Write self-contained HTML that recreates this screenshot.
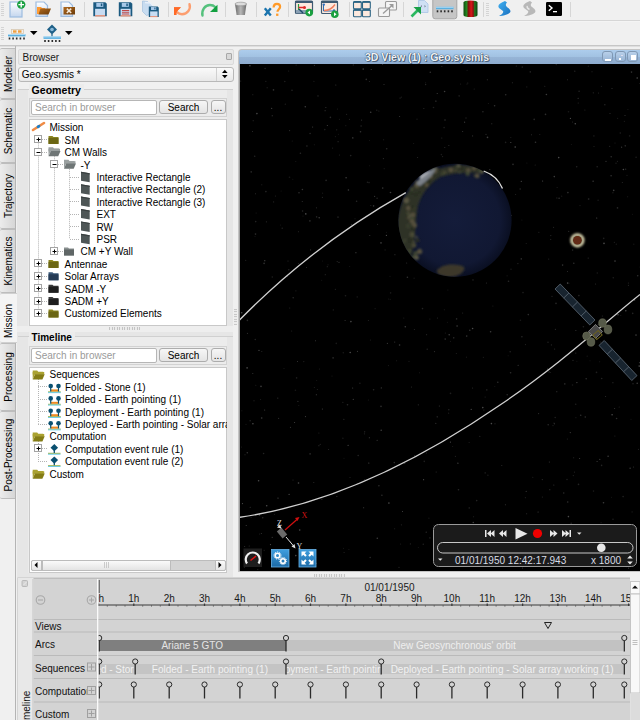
<!DOCTYPE html>
<html><head><meta charset="utf-8">
<style>
*{box-sizing:border-box;margin:0;padding:0}
html,body{width:640px;height:720px;overflow:hidden;background:#f0f0f0;font-family:"Liberation Sans",sans-serif;font-size:10px;color:#000}
.a{position:absolute}
.tb1{left:0;top:0;width:640px;height:22px;background:#f0f0f0;border-bottom:1px solid #f4f4f4}
.tb2{left:0;top:22px;width:640px;height:25px;background:#f0f0f0;border-bottom:1px solid #dedede}
.sep{width:1px;height:16px;top:2px;background:#d0d0d0}
.grip{width:3px;height:14px;background:repeating-linear-gradient(#c0c0c0 0 1px,transparent 1px 2px)}
/* vertical tabs */
.tab{left:0;width:15px;background:linear-gradient(to right,#ececec,#d6d6d6);border:1px solid #bdbdbd;border-right:none;border-left:none;border-radius:2px 0 0 2px}
.tab span{position:absolute;left:50%;top:50%;transform:translate(-50%,-50%) rotate(-90deg);white-space:nowrap;font-size:10px;color:#000}
.tab.sel{background:#f4f4f4;width:17px;border-color:#d0d0d0}
/* dock */
.hdr{background:#e9e9e9;border:1px solid #dadada;border-radius:2px}
.combo{background:linear-gradient(#fafafa,#e8e8e8);border:1px solid #b8b8b8;border-radius:3px}
.gline{height:1px;background:#cfcfcf}
.gtitle{font-weight:bold;font-size:10px;background:#f0f0f0;padding:0 3px}
.field{background:#fff;border:1px solid #b6b6b6;border-radius:2px;color:#9a9a9a;padding-left:3px;line-height:13px}
.btn{background:linear-gradient(#f6f6f6,#e4e4e4);border:1px solid #acacac;border-radius:3px;text-align:center;line-height:13px}
.tree{background:#fff;border:1px solid #c8c8c8}
.ti{position:absolute;white-space:nowrap;font-size:10px;line-height:12px}
/* 3D */
.v3d{left:238px;top:48px;width:402px;height:524px;background:#000;border-left:2px solid #c8c8c8}
.ttl{left:0;top:0;width:400px;height:16px;background:linear-gradient(#b4cde6,#98b8d8);border-radius:3px 3px 0 0;border-bottom:1px solid #6f8fb0}
.tbtn{width:11px;height:11px;border:1px solid #7f98b4;border-radius:3px;background:linear-gradient(#b8d0ea,#98b4d4)}
/* timeline */
.tl{left:33px;top:579px;width:597px;height:141px;background:#d4d4d4}
</style></head><body>
<!-- toolbar 1 -->
<div class="a tb1"></div><div class="a" style="left:0;top:20px;width:640px;height:1px;background:#d6d6d6"></div>
<div class="a tb2"></div>
<svg class="a" style="left:0;top:0" width="640" height="46" viewBox="0 0 640 46">
<defs>
<linearGradient id="pg" x1="0" y1="0" x2="0" y2="1"><stop offset="0" stop-color="#ffffff"/><stop offset="1" stop-color="#c4d6ee"/></linearGradient>
<linearGradient id="cyl" x1="0" x2="1"><stop offset="0" stop-color="#0e4a0e"/><stop offset="0.22" stop-color="#228a22"/><stop offset="0.36" stop-color="#8a1010"/><stop offset="0.55" stop-color="#d81818"/><stop offset="0.7" stop-color="#901010"/><stop offset="0.8" stop-color="#1e7a1e"/><stop offset="1" stop-color="#0c3e0c"/></linearGradient>
<linearGradient id="bin" x1="0" x2="1"><stop offset="0" stop-color="#6a6a6a"/><stop offset="0.5" stop-color="#b8b8b8"/><stop offset="1" stop-color="#6a6a6a"/></linearGradient>
<linearGradient id="fold" x1="0" y1="0" x2="1" y2="1"><stop offset="0" stop-color="#b06a20"/><stop offset="1" stop-color="#6a3a08"/></linearGradient>
<linearGradient id="bs" x1="0" y1="0" x2="1" y2="1"><stop offset="0" stop-color="#40b0f0"/><stop offset="1" stop-color="#1a70c0"/></linearGradient>
</defs>
<rect x="1" y="3" width="3" height="1" fill="#d4d4d4"/>
<rect x="1" y="5" width="3" height="1" fill="#d4d4d4"/>
<rect x="1" y="7" width="3" height="1" fill="#d4d4d4"/>
<rect x="1" y="9" width="3" height="1" fill="#d4d4d4"/>
<rect x="1" y="11" width="3" height="1" fill="#d4d4d4"/>
<rect x="1" y="13" width="3" height="1" fill="#d4d4d4"/>
<rect x="1" y="15" width="3" height="1" fill="#d4d4d4"/>
<rect x="1" y="27" width="3" height="1" fill="#d4d4d4"/>
<rect x="1" y="29" width="3" height="1" fill="#d4d4d4"/>
<rect x="1" y="31" width="3" height="1" fill="#d4d4d4"/>
<rect x="1" y="33" width="3" height="1" fill="#d4d4d4"/>
<rect x="1" y="35" width="3" height="1" fill="#d4d4d4"/>
<rect x="1" y="37" width="3" height="1" fill="#d4d4d4"/>
<rect x="1" y="39" width="3" height="1" fill="#d4d4d4"/>
<rect x="486" y="3" width="3" height="1" fill="#d4d4d4"/>
<rect x="486" y="5" width="3" height="1" fill="#d4d4d4"/>
<rect x="486" y="7" width="3" height="1" fill="#d4d4d4"/>
<rect x="486" y="9" width="3" height="1" fill="#d4d4d4"/>
<rect x="486" y="11" width="3" height="1" fill="#d4d4d4"/>
<rect x="486" y="13" width="3" height="1" fill="#d4d4d4"/>
<rect x="486" y="15" width="3" height="1" fill="#d4d4d4"/>
<path d="M84.5 2V17" stroke="#d6d6d6" stroke-width="1"/>
<path d="M168.5 2V17" stroke="#d6d6d6" stroke-width="1"/>
<path d="M225.5 2V17" stroke="#d6d6d6" stroke-width="1"/>
<path d="M256.5 2V17" stroke="#d6d6d6" stroke-width="1"/>
<path d="M288.5 2V17" stroke="#d6d6d6" stroke-width="1"/>
<path d="M349.5 2V17" stroke="#d6d6d6" stroke-width="1"/>
<path d="M403.5 2V17" stroke="#d6d6d6" stroke-width="1"/>
<path d="M483.5 2V17" stroke="#d6d6d6" stroke-width="1"/>
<path d="M570.5 2V17" stroke="#d6d6d6" stroke-width="1"/>
<rect x="10.0" y="2.0" width="12" height="15" fill="url(#pg)" stroke="#9dbce0" stroke-width="1.2"/>
<circle cx="21.2" cy="4.6" r="4.2" fill="#1aa040"/><path d="M18.4 4.6h5.6M21.2 1.8v5.6" stroke="#fff" stroke-width="1.4"/>
<path d="M36.0 2.0h8l3.5 3.5v11h-11.5z" fill="url(#pg)" stroke="#9dbce0" stroke-width="1.2"/>
<path d="M37 7h4l1 1h3v6h-8z" fill="#ff9a30"/><path d="M40.5 8.5h10.5l-2.5 6h-10z" fill="url(#fold)"/>
<path d="M61.0 2.0h8l3.5 3.5v11h-11.5z" fill="url(#pg)" stroke="#9dbce0" stroke-width="1.2"/>
<rect x="63.5" y="7" width="11.5" height="7.5" fill="url(#fold)"/><path d="M66.8 8.6l4.4 4.4M71.2 8.6l-4.4 4.4" stroke="#f4e8d8" stroke-width="1.5"/>
<g transform="translate(93.3 2.3) scale(1.0)"><path d="M0 0h12l1.5 1.5v12.5h-13.5z" fill="#1c5a80"/><rect x="3" y="0.6" width="7" height="4" fill="#a8c8e8"/><rect x="7.5" y="1.2" width="1.5" height="2.6" fill="#1c5a80"/><rect x="1.8" y="6.5" width="10" height="6.5" fill="#c8dcf2"/><rect x="1.8" y="12.8" width="10" height="1.4" fill="#f09a80"/></g>
<g transform="translate(118.8 2.3) scale(1.0)"><path d="M0 0h12l1.5 1.5v12.5h-13.5z" fill="#1c5a80"/><rect x="3" y="0.6" width="7" height="4" fill="#a8c8e8"/><rect x="7.5" y="1.2" width="1.5" height="2.6" fill="#1c5a80"/><rect x="1.8" y="6.5" width="10" height="6.5" fill="#c8dcf2"/><rect x="1.8" y="12.8" width="10" height="1.4" fill="#f09a80"/><path d="M3.2 8.2h7.2M3.2 10h7.2M3.2 11.7h7.2" stroke="#c04848" stroke-width="1.1"/></g>
<path d="M142.5 1l5 0.5l5 5v7l-6 2l-4-4z" fill="#c8dcf0" stroke="#a8c4e0" stroke-width="0.8"/><path d="M145 2.5l5 0.5l4 4v6" fill="none" stroke="#e8f0fa" stroke-width="1.5"/>
<g transform="translate(148.8 6.6) scale(0.74)"><path d="M0 0h12l1.5 1.5v12.5h-13.5z" fill="#1c5a80"/><rect x="3" y="0.6" width="7" height="4" fill="#a8c8e8"/><rect x="7.5" y="1.2" width="1.5" height="2.6" fill="#1c5a80"/><rect x="1.8" y="6.5" width="10" height="6.5" fill="#c8dcf2"/><rect x="1.8" y="12.8" width="10" height="1.4" fill="#f09a80"/></g>
<path d="M189.5 4.2c1.5 5-2 10-7.5 10c-2 0-3.8-0.8-5-2" stroke="#ff8a50" stroke-width="2.4" fill="none" stroke-linecap="round" opacity="0.8"/><path d="M174 7.2h7.2l-2.4 2.4l-2.2 2.2v3.2l-2.6 0z" fill="#ff6a28"/><path d="M174 7.2l6.5 0l-6.5 7.5z" fill="#ff6a28"/>
<path d="M202.5 15.5c-1.2-5.5 2.5-10.5 7.5-10.5c2.2 0 4 0.8 5.2 2" stroke="#3ab868" stroke-width="2.4" fill="none" stroke-linecap="round" opacity="0.85"/><path d="M217.5 4.8v7.2h-7.5z" fill="#12a040"/>
<path d="M235 3.8h11.5l-1.6 11.2h-8.3z" fill="url(#bin)"/><ellipse cx="240.8" cy="4" rx="5.8" ry="1.8" fill="#dcdcdc" stroke="#8a8a8a" stroke-width="0.6"/>
<path d="M264.8 8.3l6 7.2M270.8 8.3l-6 7.2" stroke="#1a74ae" stroke-width="2.4"/><path d="M273.6 7.4c0-2.4 1.6-3.6 3.3-3.6c1.8 0 3.2 1.2 3.2 3c0 2.4-2.6 2.6-2.6 5" stroke="#ff9a28" stroke-width="2.2" fill="none"/><rect x="276.1" y="13.6" width="2.3" height="2.3" fill="#ff9a28"/>
<rect x="295.5" y="1" width="17" height="12.5" rx="1" fill="#fde9de" stroke="#3e5a72" stroke-width="1.2"/><rect x="295.5" y="1" width="17" height="2" fill="#3e5a72"/><rect x="296" y="10" width="16" height="3.3" fill="#8aa0b4"/>
<path d="M298.5 4v6" stroke="#20a040" stroke-width="1.2"/><path d="M298.5 7.5h6" stroke="#e02828" stroke-width="1.5"/><circle cx="304.5" cy="7.6" r="1.5" fill="#e02828"/><path d="M299 9l4 4" stroke="#1c4a6a" stroke-width="1.5"/>
<circle cx="309.2" cy="12.6" r="3.8" fill="#1aa040"/><path d="M307.5 12.6l2.5-2v4z" fill="#fff"/>
<rect x="321.5" y="1" width="16" height="12.5" rx="1" fill="#fde9de" stroke="#3e5a72" stroke-width="1.2"/><rect x="321.5" y="1" width="16" height="2" fill="#3e5a72"/>
<path d="M323.5 4.5v6.5h11" stroke="#3070b0" stroke-width="1" fill="none"/><path d="M324 10.5c4 0 8-1.5 11-6" stroke="#f08060" stroke-width="1.4" fill="none"/><circle cx="323.8" cy="4.6" r="1.2" fill="#3070c0"/><circle cx="334" cy="10.5" r="1.2" fill="#3070c0"/>
<circle cx="334.8" cy="14.2" r="3.8" fill="#1aa040"/><path d="M336.5 14.2l-2.5-2v4z" fill="#fff"/>
<rect x="353.5" y="1.5" width="7.8" height="7.2" rx="1" fill="#fde9de" stroke="#2c6484" stroke-width="1.1"/><rect x="353.5" y="1.5" width="7.8" height="1.4" fill="#2c6484"/>
<rect x="362.5" y="1.5" width="7.8" height="7.2" rx="1" fill="#fde9de" stroke="#2c6484" stroke-width="1.1"/><rect x="362.5" y="1.5" width="7.8" height="1.4" fill="#2c6484"/>
<rect x="353.5" y="9.5" width="7.8" height="7.2" rx="1" fill="#fde9de" stroke="#2c6484" stroke-width="1.1"/><rect x="353.5" y="9.5" width="7.8" height="1.4" fill="#2c6484"/>
<rect x="362.5" y="9.5" width="7.8" height="7.2" rx="1" fill="#fde9de" stroke="#2c6484" stroke-width="1.1"/><rect x="362.5" y="9.5" width="7.8" height="1.4" fill="#2c6484"/>
<rect x="385.5" y="1.5" width="11" height="8.5" rx="1" fill="#f4f4f4" stroke="#9a9a9a" stroke-width="1.1"/><rect x="378.5" y="8" width="11" height="8.5" rx="1" fill="#f4f4f4" stroke="#9a9a9a" stroke-width="1.1"/><path d="M383 13.5l9-8" stroke="#9a9a9a" stroke-width="1.3"/><path d="M393.5 4v4.5l-4.5-4.5z" fill="#9a9a9a"/>
<path d="M418.5 0.5h6l3.5 3.5v8.5h-9.5z" fill="#cfe0f4" stroke="#a8c4e4" stroke-width="0.8"/><path d="M420.5 6.2l1.2-1.2v2.4zM425.8 6.2l-1.2-1.2v2.4z" fill="#607080"/>
<path d="M411.5 16.5l7-7" stroke="#2ab860" stroke-width="2.6"/><path d="M421 7h-7.5l7.5 7.5z" fill="#1aa048"/>
<path d="M432.8 0V16.5q0 2.3 2.3 2.3h19.4q2.3 0 2.3 -2.3V0" fill="#c6c6c6" stroke="#a6a6a6" stroke-width="1"/>
<rect x="436" y="6.8" width="17.5" height="2.4" fill="#5ab0e0"/><rect x="436" y="6.8" width="17.5" height="0.9" fill="#b8e0f8"/>
<rect x="436.7" y="10.3" width="1.6" height="2" fill="#2a2a2a"/>
<rect x="440.3" y="10.3" width="1.6" height="2" fill="#2a2a2a"/>
<rect x="443.9" y="10.3" width="1.6" height="2" fill="#2a2a2a"/>
<rect x="447.6" y="10.3" width="1.6" height="2" fill="#2a2a2a"/>
<rect x="451.2" y="10.3" width="1.6" height="2" fill="#2a2a2a"/>
<path d="M463.5 2.5q0-2 7-2t7 2v12.5q0 2-7 2t-7-2z" fill="url(#cyl)"/>
<path d="M505 1c-5 2-8 4-6 7l4 3c1 1.5-1 3.5-4 5c4 0 9-1.5 11-3.5c1.5-2-1-4-3-5.5c-2-1.5-1-3.5 0-4.5z" fill="url(#bs)"/>
<path d="M530 1c-5 2-8 4-6 7l4 3c1 1.5-1 3.5-4 5c4 0 9-1.5 11-3.5c1.5-2-1-4-3-5.5c-2-1.5-1-3.5 0-4.5z" fill="#b8b8b8"/><path d="M527.5 6c-1 1 0 2.5 2 3.5" stroke="#e8e8e8" stroke-width="1.5" fill="none"/>
<rect x="546" y="2" width="16" height="14" rx="1.2" fill="#000"/><path d="M548.8 5.2l3.2 2.8l-3.2 2.8" stroke="#fff" stroke-width="1.4" fill="none"/><rect x="553" y="11" width="4" height="1.3" fill="#fff"/>
<rect x="11.5" y="29.5" width="12" height="4" fill="none" stroke="#d8c8b0" stroke-width="0.8"/><rect x="13" y="30.3" width="3.5" height="2.4" fill="#f0a040"/><rect x="18" y="30.3" width="3.5" height="2.4" fill="#f0a040"/>
<rect x="8" y="34" width="17.5" height="2.4" fill="#5ab0e0"/><rect x="8" y="34" width="17.5" height="0.9" fill="#b8e0f8"/>
<rect x="8.7" y="37.5" width="1.6" height="2" fill="#2a2a2a"/>
<rect x="12.3" y="37.5" width="1.6" height="2" fill="#2a2a2a"/>
<rect x="15.9" y="37.5" width="1.6" height="2" fill="#2a2a2a"/>
<rect x="19.6" y="37.5" width="1.6" height="2" fill="#2a2a2a"/>
<rect x="23.2" y="37.5" width="1.6" height="2" fill="#2a2a2a"/>
<path d="M30 31h7.5l-3.75 4z" fill="#000"/><path d="M65 31h7.5l-3.75 4z" fill="#000"/>
<path d="M52 24.5l5 5l-5 5l-5-5z" fill="#1e6088"/><circle cx="52" cy="29.5" r="1.8" fill="#8ab8d8"/><path d="M52 34v2.5" stroke="#1e6088" stroke-width="1.2"/>
<rect x="43.5" y="36.5" width="17.5" height="2.4" fill="#5ab0e0"/><rect x="43.5" y="36.5" width="17.5" height="0.9" fill="#b8e0f8"/>
<rect x="44.2" y="40.0" width="1.6" height="2" fill="#2a2a2a"/>
<rect x="47.8" y="40.0" width="1.6" height="2" fill="#2a2a2a"/>
<rect x="51.5" y="40.0" width="1.6" height="2" fill="#2a2a2a"/>
<rect x="55.1" y="40.0" width="1.6" height="2" fill="#2a2a2a"/>
<rect x="58.7" y="40.0" width="1.6" height="2" fill="#2a2a2a"/>
</svg>

<div class="a" style="left:0;top:45px;width:640px;height:1px;background:#c6c6c6"></div>
<!-- vertical tabs -->
<div class="a" style="left:15px;top:46px;width:1px;height:674px;background:#b4b4b4"></div>
<div class="a tab" style="top:48px;height:51px"><span>Modeler</span></div>
<div class="a tab" style="top:99px;height:64px"><span>Schematic</span></div>
<div class="a tab" style="top:163px;height:66px"><span>Trajectory</span></div>
<div class="a tab" style="top:229px;height:64px"><span>Kinematics</span></div>
<div class="a tab sel" style="top:293px;height:50px"><span style="left:7.5px;top:27px">Mission</span></div>
<div class="a tab" style="top:343px;height:68px"><span>Processing</span></div>
<div class="a tab" style="top:411px;height:88px"><span>Post-Processing</span></div>

<!-- Browser dock -->
<div class="a hdr" style="left:18px;top:49px;width:216px;height:16px"></div>
<div class="a ti" style="left:22.5px;top:51.5px;color:#1a1a1a">Browser</div>
<div class="a" style="left:225.5px;top:53px;width:6px;height:6.5px;border:1px solid #a8a8a8;border-radius:1px;background:#d8d8d8"></div>
<div class="a combo" style="left:18px;top:66.5px;width:216px;height:15.5px"></div>
<div class="a" style="left:216px;top:68px;width:1px;height:12.5px;background:#d0d0d0"></div>
<svg class="a" style="left:219px;top:68px" width="12" height="12"><path d="M3 5h5.6L5.8 1.8z M3 7h5.6L5.8 10.2z" fill="#000"/></svg>
<div class="a ti" style="left:21.8px;top:69px">Geo.sysmis *</div>

<div class="a" style="left:17px;top:89px;width:216px;height:488px;background:#e6e6e6"></div>
<div class="a" style="left:18px;top:89px;width:215px;height:1px;background:#d0d0d0"></div>
<div class="a" style="left:28px;top:90px;width:199px;height:236px;background:#ececec"></div>
<div class="a gtitle" style="left:28.5px;top:83.9px;line-height:12px;background:#ececec;font-size:10.6px">Geometry</div>
<div class="a" style="left:28.5px;top:97.5px;width:198.5px;height:19px;border:1px solid #d2d2d2;background:#ececec"></div>
<div class="a field" style="left:31px;top:99.5px;width:126px;height:15px">Search in browser</div>
<div class="a btn" style="left:159px;top:99.5px;width:49px;height:14.5px">Search</div>
<div class="a btn" style="left:210.5px;top:99.5px;width:15px;height:14.5px">...</div>
<div class="a tree" style="left:29px;top:119px;width:198px;height:207px"></div>
<div class="a" style="left:30px;top:120px;width:197px;height:205px;overflow:hidden"><div class="a" style="left:-30px;top:-120px;width:640px;height:720px"><div class="ti" style="left:49.5px;top:122.3px">Mission</div>
<div class="ti" style="left:64.5px;top:134.7px">SM</div>
<div class="ti" style="left:64.5px;top:147.1px">CM Walls</div>
<div class="ti" style="left:80.5px;top:159.5px">-Y</div>
<div class="ti" style="left:96.5px;top:171.9px">Interactive Rectangle</div>
<div class="ti" style="left:96.5px;top:184.3px">Interactive Rectangle (2)</div>
<div class="ti" style="left:96.5px;top:196.7px">Interactive Rectangle (3)</div>
<div class="ti" style="left:96.5px;top:209.1px">EXT</div>
<div class="ti" style="left:96.5px;top:221.5px">RW</div>
<div class="ti" style="left:96.5px;top:233.9px">PSR</div>
<div class="ti" style="left:80.5px;top:246.3px">CM +Y Wall</div>
<div class="ti" style="left:64.5px;top:258.7px">Antennae</div>
<div class="ti" style="left:64.5px;top:271.1px">Solar Arrays</div>
<div class="ti" style="left:64.5px;top:283.5px">SADM -Y</div>
<div class="ti" style="left:64.5px;top:295.9px">SADM +Y</div>
<div class="ti" style="left:64.5px;top:308.3px">Customized Elements</div><svg class="a" style="left:0;top:0" width="640" height="720"><defs><linearGradient id="rg" x1="0" x2="1"><stop offset="0" stop-color="#2e2e2e"/><stop offset="1" stop-color="#7a7a7a"/></linearGradient></defs><path d="M70.0 177.5H79.0" stroke="#b4b4b4" stroke-width="1" stroke-dasharray="1 1"/>
<path d="M70.0 189.5H79.0" stroke="#b4b4b4" stroke-width="1" stroke-dasharray="1 1"/>
<path d="M70.0 201.5H79.0" stroke="#b4b4b4" stroke-width="1" stroke-dasharray="1 1"/>
<path d="M70.0 214.5H79.0" stroke="#b4b4b4" stroke-width="1" stroke-dasharray="1 1"/>
<path d="M70.0 226.5H79.0" stroke="#b4b4b4" stroke-width="1" stroke-dasharray="1 1"/>
<path d="M70.0 239.5H79.0" stroke="#b4b4b4" stroke-width="1" stroke-dasharray="1 1"/>
<path d="M38.5 143.4V309.0" stroke="#b4b4b4" stroke-width="1" stroke-dasharray="1 1"/>
<path d="M54.5 156.3V247.0" stroke="#b4b4b4" stroke-width="1" stroke-dasharray="1 1"/>
<path d="M69.5 169.2V238.6" stroke="#b4b4b4" stroke-width="1" stroke-dasharray="1 1"/>
<path d="M42.0 139.5H47.0" stroke="#b4b4b4" stroke-width="1" stroke-dasharray="1 1"/>
<path d="M42.0 152.5H47.0" stroke="#b4b4b4" stroke-width="1" stroke-dasharray="1 1"/>
<path d="M42.0 263.5H47.0" stroke="#b4b4b4" stroke-width="1" stroke-dasharray="1 1"/>
<path d="M42.0 276.5H47.0" stroke="#b4b4b4" stroke-width="1" stroke-dasharray="1 1"/>
<path d="M42.0 288.5H47.0" stroke="#b4b4b4" stroke-width="1" stroke-dasharray="1 1"/>
<path d="M42.0 301.5H47.0" stroke="#b4b4b4" stroke-width="1" stroke-dasharray="1 1"/>
<path d="M42.0 313.5H47.0" stroke="#b4b4b4" stroke-width="1" stroke-dasharray="1 1"/>
<path d="M58.0 164.5H63.0" stroke="#b4b4b4" stroke-width="1" stroke-dasharray="1 1"/>
<path d="M58.0 251.5H63.0" stroke="#b4b4b4" stroke-width="1" stroke-dasharray="1 1"/>
<path d="M33 130L44 123" stroke="#f08c46" stroke-width="2.6" stroke-linecap="round"/><ellipse cx="38.5" cy="126.5" rx="2" ry="1.4" fill="#1e7fc8" transform="rotate(-32 38.5 126.5)"/>
<rect x="34.5" y="135.5" width="7" height="7" fill="#fff" stroke="#a4a4a4" stroke-width="1"/>
<path d="M36.5 139.5h4" stroke="#000" stroke-width="1"/>
<path d="M38.5 137.5v4" stroke="#000" stroke-width="1"/>
<path d="M48.5 135.9h4l1 1h5v7h-10z" fill="#8a8420"/><path d="M48.5 137.9h10v6h-10z" fill="#6b6614"/>
<rect x="34.5" y="148.5" width="7" height="7" fill="#fff" stroke="#a4a4a4" stroke-width="1"/>
<path d="M36.5 152.5h4" stroke="#000" stroke-width="1"/>
<path d="M48.5 147.3h4.5l1 1.2h5v2.8h-10.5z" fill="#9aa0a0"/><path d="M48.5 147.3v9l2-5h9.5v-2.5h-11.5z" fill="#9aa0a0"/><path d="M48.5 156.3l2.3-5.2h9.7l-2.3 5.2z" fill="#6f7676"/>
<rect x="50.5" y="160.5" width="7" height="7" fill="#fff" stroke="#a4a4a4" stroke-width="1"/>
<path d="M52.5 164.5h4" stroke="#000" stroke-width="1"/>
<path d="M64 159.7h4.5l1 1.2h5v2.8h-10.5z" fill="#9aa0a0"/><path d="M64 159.7v9l2-5h9.5v-2.5h-11.5z" fill="#9aa0a0"/><path d="M64 168.7l2.3-5.2h9.7l-2.3 5.2z" fill="#6f7676"/>
<path d="M81 171.79999999999998l8.7 1.5v9l-8.7-1.5z" fill="#4e5656"/><path d="M81 171.79999999999998l8.7 1.5v1.2l-8.7-1.5z" fill="#3a4040"/>
<path d="M81 184.2l8.7 1.5v9l-8.7-1.5z" fill="#4e5656"/><path d="M81 184.2l8.7 1.5v1.2l-8.7-1.5z" fill="#3a4040"/>
<path d="M81 196.6l8.7 1.5v9l-8.7-1.5z" fill="#4e5656"/><path d="M81 196.6l8.7 1.5v1.2l-8.7-1.5z" fill="#3a4040"/>
<path d="M81 209.0l8.7 1.5v9l-8.7-1.5z" fill="#4e5656"/><path d="M81 209.0l8.7 1.5v1.2l-8.7-1.5z" fill="#3a4040"/>
<path d="M81 221.39999999999998l8.7 1.5v9l-8.7-1.5z" fill="#4e5656"/><path d="M81 221.39999999999998l8.7 1.5v1.2l-8.7-1.5z" fill="#3a4040"/>
<path d="M81 233.8l8.7 1.5v9l-8.7-1.5z" fill="#4e5656"/><path d="M81 233.8l8.7 1.5v1.2l-8.7-1.5z" fill="#3a4040"/>
<rect x="50.5" y="247.5" width="7" height="7" fill="#fff" stroke="#a4a4a4" stroke-width="1"/>
<path d="M52.5 251.5h4" stroke="#000" stroke-width="1"/>
<path d="M54.5 249.5v4" stroke="#000" stroke-width="1"/>
<path d="M64 247.5h4l1 1h5v7h-10z" fill="#8a9090"/><path d="M64 249.5h10v6h-10z" fill="#5f6666"/>
<rect x="34.5" y="259.5" width="7" height="7" fill="#fff" stroke="#a4a4a4" stroke-width="1"/>
<path d="M36.5 263.5h4" stroke="#000" stroke-width="1"/>
<path d="M38.5 261.5v4" stroke="#000" stroke-width="1"/>
<path d="M48.5 259.9h4l1 1h5v7h-10z" fill="#8a8420"/><path d="M48.5 261.9h10v6h-10z" fill="#6b6614"/>
<rect x="34.5" y="272.5" width="7" height="7" fill="#fff" stroke="#a4a4a4" stroke-width="1"/>
<path d="M36.5 276.5h4" stroke="#000" stroke-width="1"/>
<path d="M38.5 274.5v4" stroke="#000" stroke-width="1"/>
<path d="M48.5 272.3h4l1 1h5v7h-10z" fill="#3a5878"/><path d="M48.5 274.3h10v6h-10z" fill="#243a55"/>
<rect x="34.5" y="284.5" width="7" height="7" fill="#fff" stroke="#a4a4a4" stroke-width="1"/>
<path d="M36.5 288.5h4" stroke="#000" stroke-width="1"/>
<path d="M38.5 286.5v4" stroke="#000" stroke-width="1"/>
<path d="M48.5 284.70000000000005h4l1 1h5v7h-10z" fill="#3a3a3a"/><path d="M48.5 286.70000000000005h10v6h-10z" fill="#1e1e1e"/>
<rect x="34.5" y="297.5" width="7" height="7" fill="#fff" stroke="#a4a4a4" stroke-width="1"/>
<path d="M36.5 301.5h4" stroke="#000" stroke-width="1"/>
<path d="M38.5 299.5v4" stroke="#000" stroke-width="1"/>
<path d="M48.5 297.1h4l1 1h5v7h-10z" fill="#3a3a3a"/><path d="M48.5 299.1h10v6h-10z" fill="#1e1e1e"/>
<rect x="34.5" y="309.5" width="7" height="7" fill="#fff" stroke="#a4a4a4" stroke-width="1"/>
<path d="M36.5 313.5h4" stroke="#000" stroke-width="1"/>
<path d="M38.5 311.5v4" stroke="#000" stroke-width="1"/>
<path d="M48.5 309.5h4l1 1h5v7h-10z" fill="#8a8420"/><path d="M48.5 311.5h10v6h-10z" fill="#6b6614"/></svg></div></div>

<div class="a" style="left:18px;top:336px;width:215px;height:1px;background:#d0d0d0"></div>
<div class="a" style="left:28px;top:337px;width:199px;height:236px;background:#ececec"></div>
<div class="a gtitle" style="left:28.5px;top:332.3px;line-height:12px;background:#ececec">Timeline</div>
<div class="a" style="left:28.5px;top:345.5px;width:198.5px;height:19px;border:1px solid #d2d2d2;background:#ececec"></div>
<div class="a field" style="left:31px;top:347.5px;width:126px;height:15px">Search in browser</div>
<div class="a btn" style="left:159px;top:347.5px;width:49px;height:14.5px">Search</div>
<div class="a btn" style="left:210.5px;top:347.5px;width:15px;height:14.5px">...</div>
<div class="a tree" style="left:29px;top:366.5px;width:198px;height:206px"></div>
<div class="a" style="left:30px;top:367px;width:197px;height:191px;overflow:hidden"><div class="a" style="left:-30px;top:-367px;width:640px;height:720px"><div class="ti" style="left:49.5px;top:369.3px">Sequences</div>
<div class="ti" style="left:65.0px;top:381.7px">Folded - Stone (1)</div>
<div class="ti" style="left:65.0px;top:394.1px">Folded - Earth pointing (1)</div>
<div class="ti" style="left:65.0px;top:406.5px">Deployment - Earth pointing (1)</div>
<div class="ti" style="left:65.0px;top:418.9px">Deployed - Earth pointing - Solar array working (1)</div>
<div class="ti" style="left:49.5px;top:431.3px">Computation</div>
<div class="ti" style="left:65.0px;top:443.7px">Computation event rule (1)</div>
<div class="ti" style="left:65.0px;top:456.1px">Computation event rule (2)</div>
<div class="ti" style="left:49.5px;top:468.5px">Custom</div><svg class="a" style="left:0;top:0" width="640" height="720"><defs><linearGradient id="rg" x1="0" x2="1"><stop offset="0" stop-color="#2e2e2e"/><stop offset="1" stop-color="#7a7a7a"/></linearGradient></defs><path d="M38.0 386.5H47.0" stroke="#b4b4b4" stroke-width="1" stroke-dasharray="1 1"/>
<path d="M38.0 399.5H47.0" stroke="#b4b4b4" stroke-width="1" stroke-dasharray="1 1"/>
<path d="M38.0 411.5H47.0" stroke="#b4b4b4" stroke-width="1" stroke-dasharray="1 1"/>
<path d="M38.0 424.5H47.0" stroke="#b4b4b4" stroke-width="1" stroke-dasharray="1 1"/>
<path d="M38.5 379.0V423.6" stroke="#b4b4b4" stroke-width="1" stroke-dasharray="1 1"/>
<path d="M42.0 448.5H47.0" stroke="#b4b4b4" stroke-width="1" stroke-dasharray="1 1"/>
<path d="M38.0 461.5H47.0" stroke="#b4b4b4" stroke-width="1" stroke-dasharray="1 1"/>
<path d="M38.5 441.0V460.8" stroke="#b4b4b4" stroke-width="1" stroke-dasharray="1 1"/>
<path d="M32.7 370.5h4.5l1 1.2h5v2.8h-10.5z" fill="#aaa230"/><path d="M32.7 370.5v9l2-5h9.5v-2.5h-11.5z" fill="#aaa230"/><path d="M32.7 379.5l2.3-5.2h9.7l-2.3 5.2z" fill="#847c14"/>
<rect x="48" y="391.4" width="12.8" height="0.9" fill="#98b048"/><rect x="48" y="392.29999999999995" width="12.8" height="0.8" fill="#50c4e4"/><rect x="51" y="389.4" width="7" height="2" fill="#f08a20"/><path d="M50.7 386.4v5M58.5 386.4v5" stroke="#0a5070" stroke-width="1.2"/><circle cx="50.7" cy="386.0" r="2.3" fill="#0a5070"/><circle cx="58.5" cy="386.0" r="2.3" fill="#0a5070"/>
<rect x="48" y="403.8" width="12.8" height="0.9" fill="#98b048"/><rect x="48" y="404.7" width="12.8" height="0.8" fill="#50c4e4"/><rect x="51" y="401.8" width="7" height="2" fill="#f08a20"/><path d="M50.7 398.8v5M58.5 398.8v5" stroke="#0a5070" stroke-width="1.2"/><circle cx="50.7" cy="398.40000000000003" r="2.3" fill="#0a5070"/><circle cx="58.5" cy="398.40000000000003" r="2.3" fill="#0a5070"/>
<rect x="48" y="416.2" width="12.8" height="0.9" fill="#98b048"/><rect x="48" y="417.09999999999997" width="12.8" height="0.8" fill="#50c4e4"/><rect x="51" y="414.2" width="7" height="2" fill="#f08a20"/><path d="M50.7 411.2v5M58.5 411.2v5" stroke="#0a5070" stroke-width="1.2"/><circle cx="50.7" cy="410.8" r="2.3" fill="#0a5070"/><circle cx="58.5" cy="410.8" r="2.3" fill="#0a5070"/>
<rect x="48" y="428.6" width="12.8" height="0.9" fill="#98b048"/><rect x="48" y="429.5" width="12.8" height="0.8" fill="#50c4e4"/><rect x="51" y="426.6" width="7" height="2" fill="#f08a20"/><path d="M50.7 423.6v5M58.5 423.6v5" stroke="#0a5070" stroke-width="1.2"/><circle cx="50.7" cy="423.20000000000005" r="2.3" fill="#0a5070"/><circle cx="58.5" cy="423.20000000000005" r="2.3" fill="#0a5070"/>
<path d="M32.7 432.5h4.5l1 1.2h5v2.8h-10.5z" fill="#aaa230"/><path d="M32.7 432.5v9l2-5h9.5v-2.5h-11.5z" fill="#aaa230"/><path d="M32.7 441.5l2.3-5.2h9.7l-2.3 5.2z" fill="#847c14"/>
<rect x="34.5" y="444.5" width="7" height="7" fill="#fff" stroke="#a4a4a4" stroke-width="1"/>
<path d="M36.5 448.5h4" stroke="#000" stroke-width="1"/>
<path d="M38.5 446.5v4" stroke="#000" stroke-width="1"/>
<rect x="48" y="452.79999999999995" width="12.5" height="1" fill="#98b048"/><rect x="48" y="453.79999999999995" width="12.5" height="0.8" fill="#50c4e4"/><path d="M54.3 449.4v3.5" stroke="#0a5070" stroke-width="1.3"/><path d="M54.3 444.09999999999997l3.8 3.6l-3.8 3.6l-3.8-3.6z" fill="#0a5070"/>
<rect x="48" y="465.2" width="12.5" height="1" fill="#98b048"/><rect x="48" y="466.2" width="12.5" height="0.8" fill="#50c4e4"/><path d="M54.3 461.8v3.5" stroke="#0a5070" stroke-width="1.3"/><path d="M54.3 456.5l3.8 3.6l-3.8 3.6l-3.8-3.6z" fill="#0a5070"/>
<path d="M32.7 469.7h4.5l1 1.2h5v2.8h-10.5z" fill="#aaa230"/><path d="M32.7 469.7v9l2-5h9.5v-2.5h-11.5z" fill="#aaa230"/><path d="M32.7 478.7l2.3-5.2h9.7l-2.3 5.2z" fill="#847c14"/></svg></div></div>
<div class="a" style="left:30.5px;top:559.5px;width:195px;height:11px;background:#d4d4d4;border:1px solid #bcbcbc;border-radius:2px"></div>
<div class="a" style="left:30.5px;top:559.5px;width:11.5px;height:11px;background:linear-gradient(#fbfbfb,#e6e6e6);border:1px solid #bcbcbc;border-radius:2px 0 0 2px"></div>
<div class="a" style="left:41.5px;top:559.5px;width:129.5px;height:11px;background:linear-gradient(#fafafa,#e4e4e4);border:1px solid #bcbcbc"></div>
<div class="a" style="left:214.5px;top:559.5px;width:11px;height:11px;background:linear-gradient(#fbfbfb,#e6e6e6);border:1px solid #bcbcbc;border-radius:0 2px 2px 0"></div>
<svg class="a" style="left:30px;top:559px" width="200" height="12"><path d="M4.5 6l3-3v6z" fill="#000"/><path d="M191.5 6l-3-3v6z" fill="#000"/><path d="M74.5 3v6M76.5 3v6M78.5 3v6" stroke="#c0c0c0" stroke-width="0.8"/></svg>

<!-- 3D view -->
<div class="a" style="left:238px;top:49px;width:402px;height:523px;background:#c4c4c4;border-radius:4px 0 0 0"></div>
<div class="a" style="left:239px;top:50px;width:401px;height:14px;background:linear-gradient(#acccec,#a2c2e2 48%,#96b4d6 52%,#8eaccf);border-radius:3px 0 0 0"></div>
<div class="a" style="left:239px;top:64px;width:1px;height:507px;background:#a0a0a0"></div>
<div class="a" style="left:365px;top:51px;font-weight:bold;font-size:10.5px;line-height:12px;color:#eef2f6;text-shadow:0 0 1px #34465c,0 0 1px #34465c,1px 1px 0 rgba(40,56,76,.6);white-space:nowrap">3D View (1) : Geo.sysmis</div>
<div class="a tbtn" style="left:602px;top:51px"><div class="a" style="left:2px;top:7px;width:6px;height:2px;background:#fff"></div></div>
<div class="a tbtn" style="left:615px;top:51px"><div class="a" style="left:3px;top:6px;width:2px;height:2px;background:#fff"></div><div class="a" style="left:5px;top:3px;width:2px;height:1px;background:#dde"></div></div>
<div class="a tbtn" style="left:627px;top:51px"><div class="a" style="left:3px;top:3px;width:5px;height:5px;background:#fff"></div></div>
<svg class="a" style="left:240px;top:64px" width="400" height="507" viewBox="240 64 400 507">
<defs>
<radialGradient id="earth" cx="0.5" cy="0.5" r="0.5"><stop offset="0" stop-color="#141c3a"/><stop offset="0.8" stop-color="#111833"/><stop offset="1" stop-color="#0a0f22"/></radialGradient>
<clipPath id="ec"><circle cx="455" cy="220.3" r="56.6"/></clipPath>
<filter id="bl" x="-20%" y="-20%" width="140%" height="140%"><feGaussianBlur stdDeviation="1.2"/></filter>
<filter id="bl2" x="-50%" y="-50%" width="200%" height="200%"><feGaussianBlur stdDeviation="0.6"/></filter>
</defs>
<rect x="240" y="64" width="400" height="507" fill="#000"/>
<circle cx="369.5" cy="140.5" r="0.5" fill="rgb(25,25,25)"/>
<circle cx="568.5" cy="111.7" r="0.8" fill="rgb(25,25,25)"/>
<circle cx="325.9" cy="107.6" r="0.5" fill="rgb(60,60,60)"/>
<circle cx="336.3" cy="343.4" r="0.8" fill="rgb(25,25,25)"/>
<circle cx="289.5" cy="177.2" r="0.8" fill="rgb(25,25,25)"/>
<circle cx="474.2" cy="89.1" r="0.5" fill="rgb(40,40,40)"/>
<circle cx="462.7" cy="131.5" r="0.5" fill="rgb(60,60,60)"/>
<circle cx="456.3" cy="353.5" r="0.5" fill="rgb(35,35,35)"/>
<circle cx="472.6" cy="387.9" r="0.5" fill="rgb(50,50,50)"/>
<circle cx="459.1" cy="95.8" r="0.8" fill="rgb(25,25,25)"/>
<circle cx="322.4" cy="409.0" r="0.6" fill="rgb(60,60,60)"/>
<circle cx="426.2" cy="532.2" r="0.6" fill="rgb(50,50,50)"/>
<circle cx="339.4" cy="155.1" r="0.5" fill="rgb(40,40,40)"/>
<circle cx="469.8" cy="330.3" r="0.8" fill="rgb(50,50,50)"/>
<circle cx="419.5" cy="372.7" r="0.5" fill="rgb(30,30,30)"/>
<circle cx="444.8" cy="147.6" r="0.5" fill="rgb(50,50,50)"/>
<circle cx="613.3" cy="277.8" r="0.8" fill="rgb(30,30,30)"/>
<circle cx="469.2" cy="507.9" r="0.6" fill="rgb(50,50,50)"/>
<circle cx="518.1" cy="365.3" r="0.5" fill="rgb(75,75,75)"/>
<circle cx="576.0" cy="543.0" r="0.8" fill="rgb(75,75,75)"/>
<circle cx="505.7" cy="94.8" r="0.8" fill="rgb(45,45,45)"/>
<circle cx="471.2" cy="409.4" r="0.6" fill="rgb(75,75,75)"/>
<circle cx="526.7" cy="513.7" r="0.5" fill="rgb(50,50,50)"/>
<circle cx="616.3" cy="244.2" r="0.6" fill="rgb(30,30,30)"/>
<circle cx="263.6" cy="453.5" r="0.8" fill="rgb(35,35,35)"/>
<circle cx="339.0" cy="262.2" r="0.5" fill="rgb(75,75,75)"/>
<circle cx="306.5" cy="267.6" r="0.5" fill="rgb(45,45,45)"/>
<circle cx="567.7" cy="502.0" r="0.8" fill="rgb(45,45,45)"/>
<circle cx="406.1" cy="245.9" r="0.5" fill="rgb(60,60,60)"/>
<circle cx="300.4" cy="153.3" r="0.8" fill="rgb(40,40,40)"/>
<circle cx="333.3" cy="309.9" r="0.6" fill="rgb(35,35,35)"/>
<circle cx="352.8" cy="137.9" r="0.8" fill="rgb(50,50,50)"/>
<circle cx="466.5" cy="547.2" r="0.6" fill="rgb(25,25,25)"/>
<circle cx="599.8" cy="459.4" r="0.6" fill="rgb(60,60,60)"/>
<circle cx="399.6" cy="116.5" r="0.5" fill="rgb(60,60,60)"/>
<circle cx="316.2" cy="563.2" r="0.5" fill="rgb(75,75,75)"/>
<circle cx="284.0" cy="368.6" r="0.5" fill="rgb(30,30,30)"/>
<circle cx="466.7" cy="336.1" r="0.8" fill="rgb(50,50,50)"/>
<circle cx="250.2" cy="507.3" r="0.5" fill="rgb(60,60,60)"/>
<circle cx="493.8" cy="548.4" r="0.6" fill="rgb(50,50,50)"/>
<circle cx="289.1" cy="494.4" r="0.6" fill="rgb(75,75,75)"/>
<circle cx="433.5" cy="107.5" r="0.8" fill="rgb(30,30,30)"/>
<circle cx="377.1" cy="198.2" r="0.8" fill="rgb(35,35,35)"/>
<circle cx="249.2" cy="546.1" r="0.5" fill="rgb(50,50,50)"/>
<circle cx="516.0" cy="527.5" r="0.8" fill="rgb(45,45,45)"/>
<circle cx="585.3" cy="417.0" r="0.8" fill="rgb(45,45,45)"/>
<circle cx="386.7" cy="148.7" r="0.8" fill="rgb(40,40,40)"/>
<circle cx="456.6" cy="318.9" r="0.8" fill="rgb(40,40,40)"/>
<circle cx="564.6" cy="563.4" r="0.5" fill="rgb(40,40,40)"/>
<circle cx="567.3" cy="439.1" r="0.5" fill="rgb(40,40,40)"/>
<circle cx="447.1" cy="244.3" r="0.5" fill="rgb(25,25,25)"/>
<circle cx="556.0" cy="303.4" r="0.8" fill="rgb(40,40,40)"/>
<circle cx="482.1" cy="238.6" r="0.6" fill="rgb(50,50,50)"/>
<circle cx="272.2" cy="115.8" r="0.5" fill="rgb(75,75,75)"/>
<circle cx="375.1" cy="308.7" r="0.6" fill="rgb(25,25,25)"/>
<circle cx="603.7" cy="238.4" r="0.8" fill="rgb(30,30,30)"/>
<circle cx="288.0" cy="261.0" r="0.6" fill="rgb(40,40,40)"/>
<circle cx="595.6" cy="284.0" r="0.5" fill="rgb(50,50,50)"/>
<circle cx="560.3" cy="556.6" r="0.6" fill="rgb(60,60,60)"/>
<circle cx="400.6" cy="544.0" r="0.5" fill="rgb(35,35,35)"/>
<circle cx="637.2" cy="78.0" r="0.8" fill="rgb(75,75,75)"/>
<circle cx="298.5" cy="483.0" r="0.8" fill="rgb(75,75,75)"/>
<circle cx="615.0" cy="143.0" r="0.5" fill="rgb(35,35,35)"/>
<circle cx="245.7" cy="556.2" r="0.8" fill="rgb(30,30,30)"/>
<circle cx="539.8" cy="134.6" r="0.5" fill="rgb(40,40,40)"/>
<circle cx="251.2" cy="171.9" r="0.8" fill="rgb(40,40,40)"/>
<circle cx="370.4" cy="340.0" r="0.5" fill="rgb(35,35,35)"/>
<circle cx="604.0" cy="243.4" r="0.8" fill="rgb(75,75,75)"/>
<circle cx="473.3" cy="522.5" r="0.8" fill="rgb(60,60,60)"/>
<circle cx="292.3" cy="141.0" r="0.6" fill="rgb(25,25,25)"/>
<circle cx="550.6" cy="372.5" r="0.5" fill="rgb(35,35,35)"/>
<circle cx="296.6" cy="377.9" r="0.8" fill="rgb(30,30,30)"/>
<circle cx="264.7" cy="409.9" r="0.5" fill="rgb(75,75,75)"/>
<circle cx="593.3" cy="92.8" r="0.6" fill="rgb(40,40,40)"/>
<circle cx="256.9" cy="113.6" r="0.8" fill="rgb(75,75,75)"/>
<circle cx="251.1" cy="517.3" r="0.6" fill="rgb(30,30,30)"/>
<circle cx="370.2" cy="557.5" r="0.8" fill="rgb(40,40,40)"/>
<circle cx="350.9" cy="321.6" r="0.8" fill="rgb(75,75,75)"/>
<circle cx="616.6" cy="418.5" r="0.8" fill="rgb(45,45,45)"/>
<circle cx="597.1" cy="166.7" r="0.5" fill="rgb(75,75,75)"/>
<circle cx="406.7" cy="262.9" r="0.5" fill="rgb(50,50,50)"/>
<circle cx="508.5" cy="281.2" r="0.8" fill="rgb(40,40,40)"/>
<circle cx="361.1" cy="126.0" r="0.8" fill="rgb(35,35,35)"/>
<circle cx="497.4" cy="249.7" r="0.5" fill="rgb(45,45,45)"/>
<circle cx="627.0" cy="175.3" r="0.6" fill="rgb(30,30,30)"/>
<circle cx="594.0" cy="146.5" r="0.5" fill="rgb(40,40,40)"/>
<circle cx="522.5" cy="568.0" r="0.6" fill="rgb(60,60,60)"/>
<circle cx="408.5" cy="244.8" r="0.8" fill="rgb(30,30,30)"/>
<circle cx="386.4" cy="235.4" r="0.6" fill="rgb(75,75,75)"/>
<circle cx="521.3" cy="258.9" r="0.8" fill="rgb(45,45,45)"/>
<circle cx="624.3" cy="121.2" r="0.5" fill="rgb(40,40,40)"/>
<circle cx="273.6" cy="201.9" r="0.6" fill="rgb(35,35,35)"/>
<circle cx="542.3" cy="479.6" r="0.6" fill="rgb(45,45,45)"/>
<circle cx="299.7" cy="530.0" r="0.8" fill="rgb(75,75,75)"/>
<circle cx="370.8" cy="205.5" r="0.6" fill="rgb(35,35,35)"/>
<circle cx="598.1" cy="200.3" r="0.8" fill="rgb(25,25,25)"/>
<circle cx="275.4" cy="196.1" r="0.5" fill="rgb(40,40,40)"/>
<circle cx="345.8" cy="125.7" r="0.6" fill="rgb(25,25,25)"/>
<circle cx="637.7" cy="275.8" r="0.8" fill="rgb(45,45,45)"/>
<circle cx="291.7" cy="331.1" r="0.5" fill="rgb(40,40,40)"/>
<circle cx="627.7" cy="196.8" r="0.5" fill="rgb(35,35,35)"/>
<circle cx="612.9" cy="382.7" r="0.6" fill="rgb(40,40,40)"/>
<circle cx="418.3" cy="404.8" r="0.6" fill="rgb(45,45,45)"/>
<circle cx="561.5" cy="568.2" r="0.5" fill="rgb(25,25,25)"/>
<circle cx="247.4" cy="320.4" r="0.8" fill="rgb(40,40,40)"/>
<circle cx="429.9" cy="537.9" r="0.8" fill="rgb(30,30,30)"/>
<circle cx="567.6" cy="283.1" r="0.8" fill="rgb(75,75,75)"/>
<circle cx="573.8" cy="263.3" r="0.8" fill="rgb(45,45,45)"/>
<circle cx="326.1" cy="180.4" r="0.8" fill="rgb(40,40,40)"/>
<circle cx="531.5" cy="134.8" r="0.5" fill="rgb(50,50,50)"/>
<circle cx="574.8" cy="71.2" r="0.6" fill="rgb(45,45,45)"/>
<circle cx="305.3" cy="106.8" r="0.8" fill="rgb(60,60,60)"/>
<circle cx="508.2" cy="206.9" r="0.8" fill="rgb(40,40,40)"/>
<circle cx="357.2" cy="296.9" r="0.6" fill="rgb(35,35,35)"/>
<circle cx="418.3" cy="197.5" r="0.8" fill="rgb(50,50,50)"/>
<circle cx="369.4" cy="81.5" r="0.5" fill="rgb(45,45,45)"/>
<circle cx="382.6" cy="64.5" r="0.5" fill="rgb(60,60,60)"/>
<circle cx="429.9" cy="318.9" r="0.5" fill="rgb(40,40,40)"/>
<circle cx="441.9" cy="66.5" r="0.5" fill="rgb(45,45,45)"/>
<circle cx="297.5" cy="361.5" r="0.5" fill="rgb(60,60,60)"/>
<circle cx="359.9" cy="383.2" r="0.8" fill="rgb(30,30,30)"/>
<circle cx="623.1" cy="496.6" r="0.8" fill="rgb(35,35,35)"/>
<circle cx="597.1" cy="461.5" r="0.6" fill="rgb(60,60,60)"/>
<circle cx="528.3" cy="314.6" r="0.8" fill="rgb(45,45,45)"/>
<circle cx="487.5" cy="137.4" r="0.8" fill="rgb(60,60,60)"/>
<circle cx="520.4" cy="320.3" r="0.8" fill="rgb(25,25,25)"/>
<circle cx="473.6" cy="516.7" r="0.5" fill="rgb(40,40,40)"/>
<circle cx="252.5" cy="131.5" r="0.5" fill="rgb(50,50,50)"/>
<circle cx="390.6" cy="292.9" r="0.8" fill="rgb(25,25,25)"/>
<circle cx="247.5" cy="333.4" r="0.6" fill="rgb(40,40,40)"/>
<circle cx="345.5" cy="295.7" r="0.8" fill="rgb(30,30,30)"/>
<circle cx="613.0" cy="519.2" r="0.8" fill="rgb(30,30,30)"/>
<circle cx="450.4" cy="442.1" r="0.6" fill="rgb(75,75,75)"/>
<circle cx="563.7" cy="493.0" r="0.8" fill="rgb(40,40,40)"/>
<circle cx="542.6" cy="181.0" r="0.6" fill="rgb(75,75,75)"/>
<circle cx="578.2" cy="102.9" r="0.5" fill="rgb(45,45,45)"/>
<circle cx="486.8" cy="389.9" r="0.8" fill="rgb(30,30,30)"/>
<circle cx="299.0" cy="192.7" r="0.8" fill="rgb(45,45,45)"/>
<circle cx="467.1" cy="70.3" r="0.6" fill="rgb(25,25,25)"/>
<circle cx="347.5" cy="404.7" r="0.8" fill="rgb(40,40,40)"/>
<circle cx="435.8" cy="423.4" r="0.6" fill="rgb(45,45,45)"/>
<circle cx="426.4" cy="453.0" r="0.6" fill="rgb(40,40,40)"/>
<circle cx="631.3" cy="538.7" r="0.6" fill="rgb(25,25,25)"/>
<circle cx="423.6" cy="479.7" r="0.6" fill="rgb(75,75,75)"/>
<circle cx="394.7" cy="528.7" r="0.5" fill="rgb(40,40,40)"/>
<circle cx="472.6" cy="135.9" r="0.6" fill="rgb(45,45,45)"/>
<circle cx="293.0" cy="479.9" r="0.5" fill="rgb(45,45,45)"/>
<circle cx="521.3" cy="181.3" r="0.6" fill="rgb(75,75,75)"/>
<circle cx="249.9" cy="65.8" r="0.8" fill="rgb(75,75,75)"/>
<circle cx="420.3" cy="217.1" r="0.6" fill="rgb(35,35,35)"/>
<circle cx="377.6" cy="224.3" r="0.5" fill="rgb(50,50,50)"/>
<circle cx="369.8" cy="235.5" r="0.5" fill="rgb(60,60,60)"/>
<circle cx="616.0" cy="163.2" r="0.8" fill="rgb(25,25,25)"/>
<circle cx="355.9" cy="252.7" r="0.6" fill="rgb(60,60,60)"/>
<circle cx="639.5" cy="362.7" r="0.6" fill="rgb(50,50,50)"/>
<circle cx="542.3" cy="497.1" r="0.5" fill="rgb(45,45,45)"/>
<circle cx="260.6" cy="399.6" r="0.5" fill="rgb(35,35,35)"/>
<circle cx="628.4" cy="285.2" r="0.5" fill="rgb(50,50,50)"/>
<circle cx="549.3" cy="462.1" r="0.5" fill="rgb(60,60,60)"/>
<circle cx="564.8" cy="383.9" r="0.8" fill="rgb(40,40,40)"/>
<circle cx="272.2" cy="537.3" r="0.6" fill="rgb(60,60,60)"/>
<circle cx="486.0" cy="134.3" r="0.6" fill="rgb(45,45,45)"/>
<circle cx="259.6" cy="533.9" r="0.5" fill="rgb(35,35,35)"/>
<circle cx="428.9" cy="238.2" r="0.6" fill="rgb(45,45,45)"/>
<circle cx="535.6" cy="559.0" r="0.6" fill="rgb(45,45,45)"/>
<circle cx="502.4" cy="216.5" r="0.5" fill="rgb(60,60,60)"/>
<circle cx="306.9" cy="146.0" r="0.8" fill="rgb(40,40,40)"/>
<circle cx="602.4" cy="316.0" r="0.6" fill="rgb(40,40,40)"/>
<circle cx="602.5" cy="569.2" r="0.6" fill="rgb(75,75,75)"/>
<circle cx="295.8" cy="161.6" r="0.5" fill="rgb(30,30,30)"/>
<circle cx="376.8" cy="110.2" r="0.6" fill="rgb(40,40,40)"/>
<circle cx="343.3" cy="352.8" r="0.8" fill="rgb(25,25,25)"/>
<circle cx="588.2" cy="258.1" r="0.6" fill="rgb(40,40,40)"/>
<circle cx="348.1" cy="445.3" r="0.6" fill="rgb(75,75,75)"/>
<circle cx="469.7" cy="246.6" r="0.5" fill="rgb(40,40,40)"/>
<circle cx="348.4" cy="190.0" r="0.8" fill="rgb(60,60,60)"/>
<circle cx="418.3" cy="547.6" r="0.5" fill="rgb(25,25,25)"/>
<circle cx="252.9" cy="423.7" r="0.8" fill="rgb(75,75,75)"/>
<circle cx="435.9" cy="101.1" r="0.6" fill="rgb(75,75,75)"/>
<circle cx="339.4" cy="119.3" r="0.5" fill="rgb(35,35,35)"/>
<circle cx="448.9" cy="409.8" r="0.5" fill="rgb(75,75,75)"/>
<circle cx="460.6" cy="84.0" r="0.5" fill="rgb(35,35,35)"/>
<circle cx="467.8" cy="83.1" r="0.5" fill="rgb(45,45,45)"/>
<circle cx="490.6" cy="331.8" r="0.8" fill="rgb(60,60,60)"/>
<circle cx="545.5" cy="114.4" r="0.8" fill="rgb(45,45,45)"/>
<circle cx="617.4" cy="161.2" r="0.5" fill="rgb(45,45,45)"/>
<circle cx="556.2" cy="64.6" r="0.6" fill="rgb(45,45,45)"/>
<circle cx="351.4" cy="224.4" r="0.6" fill="rgb(40,40,40)"/>
<circle cx="450.5" cy="341.3" r="0.6" fill="rgb(25,25,25)"/>
<circle cx="521.9" cy="219.9" r="0.5" fill="rgb(25,25,25)"/>
<circle cx="439.3" cy="406.0" r="0.5" fill="rgb(60,60,60)"/>
<circle cx="342.9" cy="402.3" r="0.5" fill="rgb(50,50,50)"/>
<circle cx="437.2" cy="416.8" r="0.6" fill="rgb(60,60,60)"/>
<circle cx="513.0" cy="164.4" r="0.8" fill="rgb(45,45,45)"/>
<circle cx="578.1" cy="98.2" r="0.5" fill="rgb(75,75,75)"/>
<circle cx="364.7" cy="479.7" r="0.6" fill="rgb(40,40,40)"/>
<circle cx="328.6" cy="449.6" r="0.5" fill="rgb(45,45,45)"/>
<circle cx="620.8" cy="315.4" r="0.5" fill="rgb(35,35,35)"/>
<circle cx="434.0" cy="525.6" r="0.8" fill="rgb(25,25,25)"/>
<circle cx="298.6" cy="263.5" r="0.5" fill="rgb(40,40,40)"/>
<circle cx="629.6" cy="135.9" r="0.8" fill="rgb(25,25,25)"/>
<circle cx="264.1" cy="263.4" r="0.8" fill="rgb(50,50,50)"/>
<circle cx="285.3" cy="104.2" r="0.6" fill="rgb(35,35,35)"/>
<circle cx="316.3" cy="394.8" r="0.5" fill="rgb(75,75,75)"/>
<circle cx="364.7" cy="431.8" r="0.6" fill="rgb(50,50,50)"/>
<circle cx="417.0" cy="119.2" r="0.6" fill="rgb(30,30,30)"/>
<circle cx="272.3" cy="277.0" r="0.8" fill="rgb(30,30,30)"/>
<circle cx="625.7" cy="169.2" r="0.6" fill="rgb(50,50,50)"/>
<circle cx="568.8" cy="283.3" r="0.8" fill="rgb(25,25,25)"/>
<circle cx="429.4" cy="253.0" r="0.5" fill="rgb(75,75,75)"/>
<circle cx="369.3" cy="437.8" r="0.5" fill="rgb(75,75,75)"/>
<circle cx="492.7" cy="189.7" r="0.5" fill="rgb(60,60,60)"/>
<circle cx="390.2" cy="299.3" r="0.6" fill="rgb(25,25,25)"/>
<circle cx="318.0" cy="95.9" r="0.6" fill="rgb(50,50,50)"/>
<circle cx="348.9" cy="549.5" r="0.6" fill="rgb(25,25,25)"/>
<circle cx="538.6" cy="413.6" r="0.6" fill="rgb(45,45,45)"/>
<circle cx="241.5" cy="447.1" r="0.5" fill="rgb(30,30,30)"/>
<circle cx="570.4" cy="118.4" r="0.6" fill="rgb(75,75,75)"/>
<circle cx="555.9" cy="527.2" r="0.5" fill="rgb(75,75,75)"/>
<circle cx="611.2" cy="156.8" r="0.8" fill="rgb(45,45,45)"/>
<circle cx="549.1" cy="371.9" r="0.6" fill="rgb(50,50,50)"/>
<circle cx="424.3" cy="461.4" r="0.8" fill="rgb(30,30,30)"/>
<circle cx="318.9" cy="445.7" r="0.6" fill="rgb(40,40,40)"/>
<circle cx="265.9" cy="81.2" r="0.5" fill="rgb(50,50,50)"/>
<circle cx="632.1" cy="511.9" r="0.6" fill="rgb(30,30,30)"/>
<circle cx="489.8" cy="169.6" r="0.6" fill="rgb(60,60,60)"/>
<circle cx="635.4" cy="556.9" r="0.5" fill="rgb(35,35,35)"/>
<circle cx="293.2" cy="297.7" r="0.8" fill="rgb(40,40,40)"/>
<circle cx="455.4" cy="456.4" r="0.6" fill="rgb(30,30,30)"/>
<circle cx="357.5" cy="351.4" r="0.6" fill="rgb(50,50,50)"/>
<circle cx="535.2" cy="165.0" r="0.5" fill="rgb(40,40,40)"/>
<circle cx="338.1" cy="141.7" r="0.6" fill="rgb(40,40,40)"/>
<circle cx="265.9" cy="191.6" r="0.8" fill="rgb(40,40,40)"/>
<circle cx="450.5" cy="393.4" r="0.8" fill="rgb(30,30,30)"/>
<circle cx="425.6" cy="82.8" r="0.6" fill="rgb(25,25,25)"/>
<circle cx="593.1" cy="181.2" r="0.6" fill="rgb(75,75,75)"/>
<circle cx="256.1" cy="212.9" r="0.5" fill="rgb(30,30,30)"/>
<circle cx="315.8" cy="557.3" r="0.5" fill="rgb(40,40,40)"/>
<circle cx="388.9" cy="503.1" r="0.8" fill="rgb(75,75,75)"/>
<circle cx="344.0" cy="458.3" r="0.5" fill="rgb(25,25,25)"/>
<circle cx="495.0" cy="423.8" r="0.5" fill="rgb(50,50,50)"/>
<circle cx="255.0" cy="236.4" r="0.5" fill="rgb(25,25,25)"/>
<circle cx="639.9" cy="83.4" r="0.5" fill="rgb(40,40,40)"/>
<circle cx="567.5" cy="271.4" r="0.5" fill="rgb(50,50,50)"/>
<circle cx="488.4" cy="103.5" r="0.6" fill="rgb(25,25,25)"/>
<circle cx="459.2" cy="96.1" r="0.6" fill="rgb(30,30,30)"/>
<circle cx="505.6" cy="142.4" r="0.8" fill="rgb(30,30,30)"/>
<circle cx="305.5" cy="416.6" r="0.6" fill="rgb(60,60,60)"/>
<circle cx="507.1" cy="275.8" r="0.6" fill="rgb(25,25,25)"/>
<circle cx="538.1" cy="512.0" r="0.6" fill="rgb(60,60,60)"/>
<circle cx="247.3" cy="452.7" r="0.8" fill="rgb(50,50,50)"/>
<circle cx="318.9" cy="433.1" r="0.5" fill="rgb(40,40,40)"/>
<circle cx="413.7" cy="143.4" r="0.5" fill="rgb(30,30,30)"/>
<circle cx="402.5" cy="511.6" r="0.5" fill="rgb(75,75,75)"/>
<circle cx="292.0" cy="90.2" r="0.8" fill="rgb(35,35,35)"/>
<circle cx="562.6" cy="265.1" r="0.8" fill="rgb(50,50,50)"/>
<circle cx="441.8" cy="138.0" r="0.5" fill="rgb(45,45,45)"/>
<circle cx="448.5" cy="533.2" r="0.6" fill="rgb(30,30,30)"/>
<circle cx="436.2" cy="472.0" r="0.6" fill="rgb(40,40,40)"/>
<circle cx="290.7" cy="542.1" r="0.6" fill="rgb(75,75,75)"/>
<circle cx="261.3" cy="533.6" r="0.5" fill="rgb(60,60,60)"/>
<circle cx="601.7" cy="378.5" r="0.8" fill="rgb(35,35,35)"/>
<circle cx="554.3" cy="176.6" r="0.8" fill="rgb(60,60,60)"/>
<circle cx="578.5" cy="484.4" r="0.8" fill="rgb(35,35,35)"/>
<circle cx="327.3" cy="266.7" r="0.6" fill="rgb(35,35,35)"/>
<circle cx="383.7" cy="139.8" r="0.5" fill="rgb(40,40,40)"/>
<circle cx="593.5" cy="491.1" r="0.8" fill="rgb(25,25,25)"/>
<circle cx="575.3" cy="123.7" r="0.8" fill="rgb(75,75,75)"/>
<circle cx="579.6" cy="458.5" r="0.6" fill="rgb(60,60,60)"/>
<circle cx="473.0" cy="279.9" r="0.6" fill="rgb(50,50,50)"/>
<circle cx="441.4" cy="154.6" r="0.8" fill="rgb(25,25,25)"/>
<circle cx="634.5" cy="299.9" r="0.8" fill="rgb(75,75,75)"/>
<circle cx="552.0" cy="296.4" r="0.6" fill="rgb(35,35,35)"/>
<circle cx="400.1" cy="98.0" r="0.6" fill="rgb(50,50,50)"/>
<circle cx="386.1" cy="470.8" r="0.5" fill="rgb(25,25,25)"/>
<circle cx="494.6" cy="105.7" r="0.8" fill="rgb(50,50,50)"/>
<circle cx="444.6" cy="91.5" r="0.8" fill="rgb(60,60,60)"/>
<circle cx="620.3" cy="133.0" r="0.8" fill="rgb(30,30,30)"/>
<circle cx="532.8" cy="477.2" r="0.5" fill="rgb(40,40,40)"/>
<circle cx="632.7" cy="313.4" r="0.8" fill="rgb(35,35,35)"/>
<circle cx="555.4" cy="535.8" r="0.6" fill="rgb(30,30,30)"/>
<circle cx="484.2" cy="191.9" r="0.8" fill="rgb(50,50,50)"/>
<circle cx="350.0" cy="477.5" r="0.6" fill="rgb(35,35,35)"/>
<circle cx="440.9" cy="530.4" r="0.8" fill="rgb(40,40,40)"/>
<circle cx="345.1" cy="320.5" r="0.6" fill="rgb(50,50,50)"/>
<circle cx="254.7" cy="156.3" r="0.8" fill="rgb(35,35,35)"/>
<circle cx="614.6" cy="408.6" r="0.5" fill="rgb(60,60,60)"/>
<circle cx="556.8" cy="198.0" r="0.8" fill="rgb(25,25,25)"/>
<circle cx="583.3" cy="553.8" r="0.8" fill="rgb(75,75,75)"/>
<circle cx="448.6" cy="413.2" r="0.6" fill="rgb(30,30,30)"/>
<circle cx="637.2" cy="383.3" r="0.8" fill="rgb(60,60,60)"/>
<circle cx="559.1" cy="198.2" r="0.8" fill="rgb(50,50,50)"/>
<circle cx="298.5" cy="231.7" r="0.6" fill="rgb(30,30,30)"/>
<circle cx="332.0" cy="376.0" r="0.6" fill="rgb(25,25,25)"/>
<circle cx="567.9" cy="192.6" r="0.8" fill="rgb(50,50,50)"/>
<circle cx="240.7" cy="81.1" r="0.6" fill="rgb(35,35,35)"/>
<circle cx="486.4" cy="283.1" r="0.5" fill="rgb(50,50,50)"/>
<circle cx="292.8" cy="179.2" r="0.5" fill="rgb(25,25,25)"/>
<circle cx="261.8" cy="351.5" r="0.5" fill="rgb(45,45,45)"/>
<circle cx="449.2" cy="334.8" r="0.8" fill="rgb(60,60,60)"/>
<circle cx="360.5" cy="131.8" r="0.8" fill="rgb(50,50,50)"/>
<circle cx="571.4" cy="144.4" r="0.5" fill="rgb(25,25,25)"/>
<circle cx="523.0" cy="292.6" r="0.8" fill="rgb(30,30,30)"/>
<circle cx="297.9" cy="401.4" r="0.6" fill="rgb(45,45,45)"/>
<circle cx="564.6" cy="554.3" r="0.8" fill="rgb(25,25,25)"/>
<circle cx="568.4" cy="516.6" r="0.8" fill="rgb(75,75,75)"/>
<circle cx="614.9" cy="435.9" r="0.5" fill="rgb(40,40,40)"/>
<circle cx="601.4" cy="86.3" r="0.6" fill="rgb(25,25,25)"/>
<circle cx="314.3" cy="144.7" r="0.5" fill="rgb(30,30,30)"/>
<circle cx="485.1" cy="397.0" r="0.5" fill="rgb(40,40,40)"/>
<circle cx="405.3" cy="326.8" r="0.8" fill="rgb(60,60,60)"/>
<circle cx="309.9" cy="220.9" r="0.8" fill="rgb(45,45,45)"/>
<circle cx="259.4" cy="514.9" r="0.8" fill="rgb(75,75,75)"/>
<circle cx="455.4" cy="254.2" r="0.8" fill="rgb(60,60,60)"/>
<circle cx="604.9" cy="104.8" r="0.5" fill="rgb(75,75,75)"/>
<circle cx="330.4" cy="117.4" r="0.8" fill="rgb(40,40,40)"/>
<circle cx="255.5" cy="234.1" r="0.8" fill="rgb(45,45,45)"/>
<circle cx="261.0" cy="386.4" r="0.8" fill="rgb(60,60,60)"/>
<circle cx="555.4" cy="329.3" r="0.6" fill="rgb(45,45,45)"/>
<circle cx="496.8" cy="553.3" r="0.5" fill="rgb(40,40,40)"/>
<circle cx="592.0" cy="71.7" r="0.5" fill="rgb(45,45,45)"/>
<circle cx="576.7" cy="166.8" r="0.8" fill="rgb(35,35,35)"/>
<circle cx="606.0" cy="161.3" r="0.6" fill="rgb(60,60,60)"/>
<circle cx="480.5" cy="256.4" r="0.6" fill="rgb(75,75,75)"/>
<circle cx="575.9" cy="417.7" r="0.6" fill="rgb(25,25,25)"/>
<circle cx="622.3" cy="182.6" r="0.5" fill="rgb(45,45,45)"/>
<circle cx="396.6" cy="360.8" r="0.5" fill="rgb(35,35,35)"/>
<circle cx="253.2" cy="120.7" r="0.6" fill="rgb(35,35,35)"/>
<circle cx="631.0" cy="419.3" r="0.5" fill="rgb(25,25,25)"/>
<circle cx="295.4" cy="390.3" r="0.8" fill="rgb(25,25,25)"/>
<circle cx="267.1" cy="87.7" r="0.5" fill="rgb(50,50,50)"/>
<circle cx="567.0" cy="479.5" r="0.8" fill="rgb(30,30,30)"/>
<circle cx="617.7" cy="118.3" r="0.5" fill="rgb(40,40,40)"/>
<circle cx="284.8" cy="81.5" r="0.8" fill="rgb(30,30,30)"/>
<circle cx="492.9" cy="305.9" r="0.5" fill="rgb(35,35,35)"/>
<circle cx="556.8" cy="391.7" r="0.6" fill="rgb(45,45,45)"/>
<circle cx="374.6" cy="196.4" r="0.6" fill="rgb(50,50,50)"/>
<circle cx="612.0" cy="88.5" r="0.6" fill="rgb(50,50,50)"/>
<circle cx="547.7" cy="369.2" r="0.6" fill="rgb(75,75,75)"/>
<circle cx="487.3" cy="79.7" r="0.5" fill="rgb(60,60,60)"/>
<circle cx="414.6" cy="455.9" r="0.6" fill="rgb(50,50,50)"/>
<circle cx="521.9" cy="336.7" r="0.8" fill="rgb(40,40,40)"/>
<circle cx="584.9" cy="110.1" r="0.5" fill="rgb(45,45,45)"/>
<circle cx="414.4" cy="329.4" r="0.5" fill="rgb(45,45,45)"/>
<circle cx="241.7" cy="312.8" r="0.8" fill="rgb(75,75,75)"/>
<circle cx="558.7" cy="157.6" r="0.8" fill="rgb(75,75,75)"/>
<circle cx="378.9" cy="485.7" r="0.8" fill="rgb(45,45,45)"/>
<circle cx="617.5" cy="207.9" r="0.8" fill="rgb(40,40,40)"/>
<circle cx="332.6" cy="148.1" r="0.6" fill="rgb(30,30,30)"/>
<circle cx="555.2" cy="417.5" r="0.8" fill="rgb(30,30,30)"/>
<circle cx="370.7" cy="112.2" r="0.8" fill="rgb(60,60,60)"/>
<circle cx="274.5" cy="514.4" r="0.6" fill="rgb(25,25,25)"/>
<circle cx="322.4" cy="197.4" r="0.6" fill="rgb(35,35,35)"/>
<circle cx="633.0" cy="383.8" r="0.5" fill="rgb(75,75,75)"/>
<circle cx="452.6" cy="446.5" r="0.6" fill="rgb(25,25,25)"/>
<circle cx="472.6" cy="328.5" r="0.8" fill="rgb(75,75,75)"/>
<circle cx="461.5" cy="227.9" r="0.6" fill="rgb(75,75,75)"/>
<circle cx="515.6" cy="194.4" r="0.5" fill="rgb(40,40,40)"/>
<circle cx="373.6" cy="389.8" r="0.8" fill="rgb(40,40,40)"/>
<circle cx="316.6" cy="216.9" r="0.8" fill="rgb(35,35,35)"/>
<circle cx="302.4" cy="189.5" r="0.8" fill="rgb(50,50,50)"/>
<circle cx="448.9" cy="145.6" r="0.5" fill="rgb(50,50,50)"/>
<circle cx="343.5" cy="548.2" r="0.5" fill="rgb(30,30,30)"/>
<circle cx="625.0" cy="115.5" r="0.5" fill="rgb(60,60,60)"/>
<circle cx="633.5" cy="467.0" r="0.6" fill="rgb(45,45,45)"/>
<circle cx="349.5" cy="119.4" r="0.6" fill="rgb(30,30,30)"/>
<circle cx="322.6" cy="260.9" r="0.5" fill="rgb(25,25,25)"/>
<circle cx="399.6" cy="465.0" r="0.8" fill="rgb(40,40,40)"/>
<circle cx="632.4" cy="214.2" r="0.5" fill="rgb(25,25,25)"/>
<circle cx="342.9" cy="438.3" r="0.8" fill="rgb(25,25,25)"/>
<circle cx="336.9" cy="496.4" r="0.5" fill="rgb(60,60,60)"/>
<circle cx="507.2" cy="394.8" r="0.8" fill="rgb(40,40,40)"/>
<circle cx="312.6" cy="127.0" r="0.6" fill="rgb(60,60,60)"/>
<circle cx="343.9" cy="419.2" r="0.5" fill="rgb(60,60,60)"/>
<circle cx="553.0" cy="425.6" r="0.6" fill="rgb(35,35,35)"/>
<circle cx="579.8" cy="308.8" r="0.8" fill="rgb(25,25,25)"/>
<circle cx="583.4" cy="326.8" r="0.8" fill="rgb(35,35,35)"/>
<circle cx="371.2" cy="69.4" r="0.5" fill="rgb(75,75,75)"/>
<circle cx="255.3" cy="339.5" r="0.8" fill="rgb(35,35,35)"/>
<circle cx="552.7" cy="540.9" r="0.5" fill="rgb(50,50,50)"/>
<circle cx="578.9" cy="295.6" r="0.8" fill="rgb(40,40,40)"/>
<circle cx="430.3" cy="72.2" r="0.8" fill="rgb(50,50,50)"/>
<circle cx="377.1" cy="440.2" r="0.5" fill="rgb(75,75,75)"/>
<circle cx="636.1" cy="157.2" r="0.8" fill="rgb(30,30,30)"/>
<circle cx="633.8" cy="244.2" r="0.6" fill="rgb(25,25,25)"/>
<circle cx="349.7" cy="266.6" r="0.5" fill="rgb(25,25,25)"/>
<circle cx="407.4" cy="277.2" r="0.8" fill="rgb(50,50,50)"/>
<circle cx="346.1" cy="177.8" r="0.8" fill="rgb(60,60,60)"/>
<circle cx="628.6" cy="568.1" r="0.6" fill="rgb(60,60,60)"/>
<circle cx="324.8" cy="129.6" r="0.8" fill="rgb(30,30,30)"/>
<circle cx="317.3" cy="389.6" r="0.5" fill="rgb(40,40,40)"/>
<circle cx="381.3" cy="387.9" r="0.6" fill="rgb(60,60,60)"/>
<circle cx="638.5" cy="449.3" r="0.6" fill="rgb(35,35,35)"/>
<circle cx="381.9" cy="495.3" r="0.8" fill="rgb(45,45,45)"/>
<circle cx="390.5" cy="192.5" r="0.8" fill="rgb(60,60,60)"/>
<circle cx="314.4" cy="65.4" r="0.6" fill="rgb(45,45,45)"/>
<circle cx="338.0" cy="217.0" r="0.6" fill="rgb(75,75,75)"/>
<circle cx="411.4" cy="387.1" r="0.5" fill="rgb(50,50,50)"/>
<circle cx="611.5" cy="497.2" r="0.5" fill="rgb(25,25,25)"/>
<circle cx="571.2" cy="523.2" r="0.8" fill="rgb(35,35,35)"/>
<circle cx="572.5" cy="385.0" r="0.8" fill="rgb(25,25,25)"/>
<circle cx="244.6" cy="546.5" r="0.6" fill="rgb(45,45,45)"/>
<circle cx="483.3" cy="357.3" r="0.5" fill="rgb(40,40,40)"/>
<circle cx="550.5" cy="239.6" r="0.5" fill="rgb(35,35,35)"/>
<circle cx="601.6" cy="465.4" r="0.8" fill="rgb(35,35,35)"/>
<circle cx="596.5" cy="372.4" r="0.8" fill="rgb(30,30,30)"/>
<circle cx="600.7" cy="342.1" r="0.5" fill="rgb(45,45,45)"/>
<circle cx="437.8" cy="172.0" r="0.8" fill="rgb(30,30,30)"/>
<circle cx="575.7" cy="404.3" r="0.8" fill="rgb(30,30,30)"/>
<circle cx="287.4" cy="276.5" r="0.6" fill="rgb(35,35,35)"/>
<circle cx="437.2" cy="93.6" r="0.5" fill="rgb(75,75,75)"/>
<circle cx="520.2" cy="189.0" r="0.8" fill="rgb(35,35,35)"/>
<circle cx="479.8" cy="436.4" r="0.6" fill="rgb(35,35,35)"/>
<circle cx="427.2" cy="349.2" r="0.6" fill="rgb(45,45,45)"/>
<circle cx="390.0" cy="276.3" r="0.5" fill="rgb(30,30,30)"/>
<circle cx="494.8" cy="386.5" r="0.5" fill="rgb(25,25,25)"/>
<circle cx="483.9" cy="410.1" r="0.5" fill="rgb(50,50,50)"/>
<circle cx="444.3" cy="309.7" r="0.5" fill="rgb(35,35,35)"/>
<circle cx="325.3" cy="274.7" r="0.6" fill="rgb(35,35,35)"/>
<circle cx="277.8" cy="398.1" r="0.6" fill="rgb(50,50,50)"/>
<circle cx="551.4" cy="344.9" r="0.6" fill="rgb(40,40,40)"/>
<circle cx="414.1" cy="278.2" r="0.6" fill="rgb(25,25,25)"/>
<circle cx="357.2" cy="483.7" r="0.6" fill="rgb(60,60,60)"/>
<circle cx="441.5" cy="201.8" r="0.5" fill="rgb(50,50,50)"/>
<circle cx="501.8" cy="465.5" r="0.5" fill="rgb(50,50,50)"/>
<circle cx="366.8" cy="215.7" r="0.5" fill="rgb(30,30,30)"/>
<circle cx="399.6" cy="345.0" r="0.8" fill="rgb(60,60,60)"/>
<circle cx="469.6" cy="266.0" r="0.5" fill="rgb(30,30,30)"/>
<circle cx="258.6" cy="480.7" r="0.8" fill="rgb(75,75,75)"/>
<circle cx="546.4" cy="94.5" r="0.8" fill="rgb(60,60,60)"/>
<circle cx="298.8" cy="405.6" r="0.5" fill="rgb(30,30,30)"/>
<circle cx="255.8" cy="385.2" r="0.5" fill="rgb(35,35,35)"/>
<circle cx="505.4" cy="504.7" r="0.5" fill="rgb(60,60,60)"/>
<circle cx="605.6" cy="396.4" r="0.5" fill="rgb(50,50,50)"/>
<circle cx="554.6" cy="349.0" r="0.6" fill="rgb(45,45,45)"/>
<circle cx="313.9" cy="81.4" r="0.6" fill="rgb(25,25,25)"/>
<circle cx="466.5" cy="357.2" r="0.6" fill="rgb(25,25,25)"/>
<circle cx="467.0" cy="84.0" r="0.6" fill="rgb(30,30,30)"/>
<circle cx="470.1" cy="529.7" r="0.5" fill="rgb(75,75,75)"/>
<circle cx="245.7" cy="260.3" r="0.6" fill="rgb(35,35,35)"/>
<circle cx="548.0" cy="342.2" r="0.8" fill="rgb(30,30,30)"/>
<circle cx="428.9" cy="518.2" r="0.6" fill="rgb(25,25,25)"/>
<circle cx="241.9" cy="410.7" r="0.5" fill="rgb(30,30,30)"/>
<circle cx="327.3" cy="125.5" r="0.5" fill="rgb(75,75,75)"/>
<circle cx="350.2" cy="352.5" r="0.8" fill="rgb(75,75,75)"/>
<circle cx="537.7" cy="531.9" r="0.8" fill="rgb(50,50,50)"/>
<circle cx="525.4" cy="497.7" r="0.6" fill="rgb(30,30,30)"/>
<circle cx="491.4" cy="423.6" r="0.8" fill="rgb(75,75,75)"/>
<circle cx="612.9" cy="192.8" r="0.8" fill="rgb(25,25,25)"/>
<circle cx="252.8" cy="94.7" r="0.6" fill="rgb(30,30,30)"/>
<circle cx="364.4" cy="433.8" r="0.6" fill="rgb(35,35,35)"/>
<circle cx="483.6" cy="224.4" r="0.6" fill="rgb(75,75,75)"/>
<circle cx="510.8" cy="137.5" r="0.6" fill="rgb(30,30,30)"/>
<circle cx="621.6" cy="147.2" r="0.6" fill="rgb(60,60,60)"/>
<circle cx="394.3" cy="462.6" r="0.8" fill="rgb(45,45,45)"/>
<circle cx="373.6" cy="205.9" r="0.8" fill="rgb(50,50,50)"/>
<circle cx="530.3" cy="71.9" r="0.8" fill="rgb(35,35,35)"/>
<circle cx="573.0" cy="360.4" r="0.6" fill="rgb(40,40,40)"/>
<circle cx="394.9" cy="254.7" r="0.6" fill="rgb(40,40,40)"/>
<circle cx="353.3" cy="64.9" r="0.6" fill="rgb(45,45,45)"/>
<circle cx="409.0" cy="361.4" r="0.6" fill="rgb(25,25,25)"/>
<circle cx="573.3" cy="475.6" r="0.6" fill="rgb(35,35,35)"/>
<circle cx="630.1" cy="468.2" r="0.6" fill="rgb(75,75,75)"/>
<circle cx="453.8" cy="337.8" r="0.6" fill="rgb(75,75,75)"/>
<circle cx="320.2" cy="444.3" r="0.6" fill="rgb(40,40,40)"/>
<circle cx="482.8" cy="407.6" r="0.8" fill="rgb(75,75,75)"/>
<circle cx="322.6" cy="193.2" r="0.6" fill="rgb(25,25,25)"/>
<circle cx="423.9" cy="108.5" r="0.5" fill="rgb(50,50,50)"/>
<circle cx="333.1" cy="357.9" r="0.8" fill="rgb(45,45,45)"/>
<circle cx="368.4" cy="320.6" r="0.5" fill="rgb(40,40,40)"/>
<circle cx="325.1" cy="110.7" r="0.6" fill="rgb(45,45,45)"/>
<circle cx="471.1" cy="246.0" r="0.5" fill="rgb(35,35,35)"/>
<circle cx="257.8" cy="569.6" r="0.5" fill="rgb(50,50,50)"/>
<circle cx="388.7" cy="299.0" r="0.5" fill="rgb(30,30,30)"/>
<circle cx="366.3" cy="79.4" r="0.8" fill="rgb(45,45,45)"/>
<circle cx="482.9" cy="111.7" r="0.8" fill="rgb(40,40,40)"/>
<circle cx="434.5" cy="351.6" r="0.6" fill="rgb(45,45,45)"/>
<circle cx="410.4" cy="543.9" r="0.6" fill="rgb(35,35,35)"/>
<circle cx="577.5" cy="235.8" r="0.6" fill="rgb(35,35,35)"/>
<circle cx="273.5" cy="89.9" r="0.8" fill="rgb(50,50,50)"/>
<circle cx="423.3" cy="544.2" r="0.8" fill="rgb(30,30,30)"/>
<circle cx="495.9" cy="531.5" r="0.6" fill="rgb(30,30,30)"/>
<circle cx="367.5" cy="182.2" r="0.8" fill="rgb(30,30,30)"/>
<circle cx="442.6" cy="156.6" r="0.6" fill="rgb(35,35,35)"/>
<circle cx="626.3" cy="566.8" r="0.5" fill="rgb(40,40,40)"/>
<circle cx="255.5" cy="193.7" r="0.5" fill="rgb(50,50,50)"/>
<circle cx="601.1" cy="522.6" r="0.6" fill="rgb(25,25,25)"/>
<circle cx="554.5" cy="423.8" r="0.5" fill="rgb(75,75,75)"/>
<circle cx="280.4" cy="225.1" r="0.5" fill="rgb(25,25,25)"/>
<circle cx="510.8" cy="215.5" r="0.8" fill="rgb(75,75,75)"/>
<circle cx="282.2" cy="228.2" r="0.6" fill="rgb(45,45,45)"/>
<circle cx="289.7" cy="308.0" r="0.6" fill="rgb(35,35,35)"/>
<circle cx="335.4" cy="136.6" r="0.6" fill="rgb(25,25,25)"/>
<circle cx="526.9" cy="162.9" r="0.5" fill="rgb(25,25,25)"/>
<circle cx="611.1" cy="175.8" r="0.8" fill="rgb(50,50,50)"/>
<circle cx="295.9" cy="290.8" r="0.6" fill="rgb(30,30,30)"/>
<circle cx="576.9" cy="382.6" r="0.6" fill="rgb(75,75,75)"/>
<circle cx="369.0" cy="182.6" r="0.8" fill="rgb(30,30,30)"/>
<circle cx="386.4" cy="232.3" r="0.5" fill="rgb(25,25,25)"/>
<circle cx="525.5" cy="344.6" r="0.6" fill="rgb(35,35,35)"/>
<circle cx="588.3" cy="199.1" r="0.5" fill="rgb(60,60,60)"/>
<circle cx="302.3" cy="201.5" r="0.6" fill="rgb(45,45,45)"/>
<circle cx="561.7" cy="196.2" r="0.6" fill="rgb(30,30,30)"/>
<circle cx="422.5" cy="308.6" r="0.8" fill="rgb(35,35,35)"/>
<circle cx="262.7" cy="517.8" r="0.8" fill="rgb(40,40,40)"/>
<circle cx="431.0" cy="209.1" r="0.5" fill="rgb(45,45,45)"/>
<circle cx="628.3" cy="283.1" r="0.5" fill="rgb(45,45,45)"/>
<circle cx="610.0" cy="113.5" r="0.6" fill="rgb(45,45,45)"/>
<circle cx="598.5" cy="93.1" r="0.5" fill="rgb(45,45,45)"/>
<circle cx="631.5" cy="72.1" r="0.8" fill="rgb(50,50,50)"/>
<circle cx="296.1" cy="65.0" r="0.5" fill="rgb(45,45,45)"/>
<circle cx="384.0" cy="84.6" r="0.5" fill="rgb(60,60,60)"/>
<circle cx="350.7" cy="155.6" r="0.8" fill="rgb(35,35,35)"/>
<circle cx="548.2" cy="424.8" r="0.8" fill="rgb(40,40,40)"/>
<circle cx="271.7" cy="108.3" r="0.6" fill="rgb(75,75,75)"/>
<circle cx="310.1" cy="133.5" r="0.8" fill="rgb(40,40,40)"/>
<circle cx="363.2" cy="69.1" r="0.8" fill="rgb(60,60,60)"/>
<circle cx="606.5" cy="326.9" r="0.6" fill="rgb(50,50,50)"/>
<circle cx="352.7" cy="388.1" r="0.5" fill="rgb(75,75,75)"/>
<circle cx="246.2" cy="525.5" r="0.5" fill="rgb(75,75,75)"/>
<circle cx="588.8" cy="199.0" r="0.8" fill="rgb(35,35,35)"/>
<circle cx="572.6" cy="250.1" r="0.8" fill="rgb(35,35,35)"/>
<circle cx="388.5" cy="365.6" r="0.6" fill="rgb(25,25,25)"/>
<circle cx="447.9" cy="290.0" r="0.5" fill="rgb(30,30,30)"/>
<circle cx="382.7" cy="188.1" r="0.8" fill="rgb(50,50,50)"/>
<circle cx="587.2" cy="356.2" r="0.6" fill="rgb(25,25,25)"/>
<circle cx="589.1" cy="547.7" r="0.6" fill="rgb(75,75,75)"/>
<circle cx="445.3" cy="333.0" r="0.5" fill="rgb(35,35,35)"/>
<circle cx="337.4" cy="108.9" r="0.5" fill="rgb(35,35,35)"/>
<circle cx="281.1" cy="191.0" r="0.5" fill="rgb(25,25,25)"/>
<circle cx="278.6" cy="418.4" r="0.6" fill="rgb(40,40,40)"/>
<circle cx="247.1" cy="367.9" r="0.8" fill="rgb(75,75,75)"/>
<circle cx="335.3" cy="289.2" r="0.5" fill="rgb(50,50,50)"/>
<circle cx="526.8" cy="86.9" r="0.6" fill="rgb(30,30,30)"/>
<circle cx="437.4" cy="317.9" r="0.5" fill="rgb(45,45,45)"/>
<circle cx="288.8" cy="269.7" r="0.8" fill="rgb(35,35,35)"/>
<circle cx="476.7" cy="500.6" r="0.8" fill="rgb(35,35,35)"/>
<circle cx="469.1" cy="442.5" r="0.5" fill="rgb(35,35,35)"/>
<circle cx="615.0" cy="261.1" r="0.8" fill="rgb(60,60,60)"/>
<circle cx="575.9" cy="330.5" r="0.5" fill="rgb(60,60,60)"/>
<circle cx="550.8" cy="235.6" r="0.6" fill="rgb(40,40,40)"/>
<circle cx="526.2" cy="491.4" r="0.6" fill="rgb(50,50,50)"/>
<circle cx="579.1" cy="91.2" r="0.8" fill="rgb(35,35,35)"/>
<circle cx="613.7" cy="190.4" r="0.8" fill="rgb(60,60,60)"/>
<circle cx="493.1" cy="248.8" r="0.5" fill="rgb(35,35,35)"/>
<circle cx="369.7" cy="165.8" r="0.5" fill="rgb(25,25,25)"/>
<circle cx="295.8" cy="555.6" r="0.8" fill="rgb(75,75,75)"/>
<circle cx="258.7" cy="561.0" r="0.5" fill="rgb(25,25,25)"/>
<circle cx="586.2" cy="378.8" r="0.8" fill="rgb(45,45,45)"/>
<circle cx="456.9" cy="532.7" r="0.6" fill="rgb(30,30,30)"/>
<circle cx="288.7" cy="70.9" r="0.5" fill="rgb(40,40,40)"/>
<circle cx="355.0" cy="218.8" r="0.5" fill="rgb(35,35,35)"/>
<circle cx="264.1" cy="550.3" r="0.5" fill="rgb(45,45,45)"/>
<circle cx="426.6" cy="334.7" r="0.6" fill="rgb(35,35,35)"/>
<circle cx="289.6" cy="130.6" r="0.6" fill="rgb(45,45,45)"/>
<circle cx="470.9" cy="203.0" r="0.8" fill="rgb(30,30,30)"/>
<circle cx="458.5" cy="489.8" r="0.8" fill="rgb(40,40,40)"/>
<circle cx="394.7" cy="342.1" r="0.6" fill="rgb(50,50,50)"/>
<circle cx="596.7" cy="218.0" r="0.6" fill="rgb(75,75,75)"/>
<circle cx="567.5" cy="79.7" r="0.5" fill="rgb(50,50,50)"/>
<circle cx="315.5" cy="340.8" r="0.5" fill="rgb(60,60,60)"/>
<circle cx="609.7" cy="146.3" r="0.6" fill="rgb(40,40,40)"/>
<circle cx="462.7" cy="313.1" r="0.5" fill="rgb(45,45,45)"/>
<circle cx="358.2" cy="455.5" r="0.8" fill="rgb(35,35,35)"/>
<circle cx="266.7" cy="505.7" r="0.8" fill="rgb(75,75,75)"/>
<circle cx="264.8" cy="260.7" r="0.6" fill="rgb(75,75,75)"/>
<circle cx="534.2" cy="119.4" r="0.8" fill="rgb(40,40,40)"/>
<circle cx="535.5" cy="142.3" r="0.8" fill="rgb(50,50,50)"/>
<circle cx="381.0" cy="406.4" r="0.8" fill="rgb(45,45,45)"/>
<circle cx="278.0" cy="498.1" r="0.6" fill="rgb(75,75,75)"/>
<circle cx="554.0" cy="423.2" r="0.6" fill="rgb(35,35,35)"/>
<circle cx="588.3" cy="66.2" r="0.6" fill="rgb(30,30,30)"/>
<circle cx="399.0" cy="567.4" r="0.6" fill="rgb(35,35,35)"/>
<circle cx="580.0" cy="205.6" r="0.6" fill="rgb(30,30,30)"/>
<circle cx="580.7" cy="415.2" r="0.8" fill="rgb(45,45,45)"/>
<circle cx="381.0" cy="242.9" r="0.8" fill="rgb(60,60,60)"/>
<circle cx="368.8" cy="463.0" r="0.6" fill="rgb(75,75,75)"/>
<circle cx="417.6" cy="157.4" r="0.5" fill="rgb(45,45,45)"/>
<circle cx="414.3" cy="255.1" r="0.5" fill="rgb(40,40,40)"/>
<circle cx="568.7" cy="231.4" r="0.6" fill="rgb(40,40,40)"/>
<circle cx="321.7" cy="280.2" r="0.5" fill="rgb(25,25,25)"/>
<circle cx="259.0" cy="350.4" r="0.6" fill="rgb(75,75,75)"/>
<circle cx="608.1" cy="456.2" r="0.8" fill="rgb(60,60,60)"/>
<circle cx="570.3" cy="432.6" r="0.6" fill="rgb(60,60,60)"/>
<circle cx="425.7" cy="84.6" r="0.6" fill="rgb(50,50,50)"/>
<circle cx="619.2" cy="407.0" r="0.5" fill="rgb(40,40,40)"/>
<circle cx="403.8" cy="318.0" r="0.5" fill="rgb(35,35,35)"/>
<circle cx="625.8" cy="310.8" r="0.8" fill="rgb(75,75,75)"/>
<circle cx="599.7" cy="361.8" r="0.5" fill="rgb(30,30,30)"/>
<circle cx="385.1" cy="249.9" r="0.6" fill="rgb(30,30,30)"/>
<circle cx="445.0" cy="120.0" r="0.8" fill="rgb(45,45,45)"/>
<circle cx="377.3" cy="538.2" r="0.8" fill="rgb(60,60,60)"/>
<circle cx="302.6" cy="211.0" r="0.8" fill="rgb(40,40,40)"/>
<circle cx="597.3" cy="273.0" r="0.8" fill="rgb(25,25,25)"/>
<circle cx="466.0" cy="118.1" r="0.8" fill="rgb(25,25,25)"/>
<circle cx="404.6" cy="463.3" r="0.8" fill="rgb(45,45,45)"/>
<circle cx="516.3" cy="66.0" r="0.6" fill="rgb(45,45,45)"/>
<circle cx="576.9" cy="361.2" r="0.5" fill="rgb(25,25,25)"/>
<circle cx="310.1" cy="453.9" r="0.8" fill="rgb(45,45,45)"/>
<circle cx="598.2" cy="324.8" r="0.8" fill="rgb(35,35,35)"/>
<circle cx="319.4" cy="369.1" r="0.5" fill="rgb(35,35,35)"/>
<circle cx="447.4" cy="322.3" r="0.5" fill="rgb(25,25,25)"/>
<circle cx="270.5" cy="544.6" r="0.6" fill="rgb(75,75,75)"/>
<circle cx="485.2" cy="472.9" r="0.8" fill="rgb(25,25,25)"/>
<circle cx="245.0" cy="454.7" r="0.5" fill="rgb(50,50,50)"/>
<circle cx="526.2" cy="243.4" r="0.5" fill="rgb(35,35,35)"/>
<circle cx="346.6" cy="114.4" r="0.6" fill="rgb(30,30,30)"/>
<circle cx="316.7" cy="380.4" r="0.5" fill="rgb(25,25,25)"/>
<circle cx="328.0" cy="264.8" r="0.6" fill="rgb(25,25,25)"/>
<circle cx="261.8" cy="184.8" r="0.5" fill="rgb(40,40,40)"/>
<circle cx="303.8" cy="361.6" r="0.6" fill="rgb(35,35,35)"/>
<circle cx="242.5" cy="503.6" r="0.6" fill="rgb(75,75,75)"/>
<circle cx="407.4" cy="191.7" r="0.5" fill="rgb(75,75,75)"/>
<circle cx="337.2" cy="261.6" r="0.6" fill="rgb(40,40,40)"/>
<circle cx="363.7" cy="507.8" r="0.5" fill="rgb(75,75,75)"/>
<circle cx="557.1" cy="187.4" r="0.5" fill="rgb(35,35,35)"/>
<circle cx="383.4" cy="158.6" r="0.6" fill="rgb(45,45,45)"/>
<circle cx="464.6" cy="122.2" r="0.6" fill="rgb(60,60,60)"/>
<circle cx="401.3" cy="97.2" r="0.6" fill="rgb(30,30,30)"/>
<circle cx="570.3" cy="242.1" r="0.6" fill="rgb(40,40,40)"/>
<circle cx="316.5" cy="207.8" r="0.6" fill="rgb(40,40,40)"/>
<circle cx="254.0" cy="400.8" r="0.5" fill="rgb(50,50,50)"/>
<circle cx="336.7" cy="129.8" r="0.6" fill="rgb(40,40,40)"/>
<circle cx="457.9" cy="463.2" r="0.6" fill="rgb(75,75,75)"/>
<circle cx="574.5" cy="472.1" r="0.6" fill="rgb(35,35,35)"/>
<circle cx="381.2" cy="430.3" r="0.8" fill="rgb(60,60,60)"/>
<circle cx="623.4" cy="169.5" r="0.8" fill="rgb(75,75,75)"/>
<circle cx="321.8" cy="499.2" r="0.8" fill="rgb(35,35,35)"/>
<circle cx="639.2" cy="366.1" r="0.8" fill="rgb(75,75,75)"/>
<circle cx="636.0" cy="335.1" r="0.8" fill="rgb(60,60,60)"/>
<circle cx="444.1" cy="127.6" r="0.8" fill="rgb(30,30,30)"/>
<circle cx="445.2" cy="339.1" r="0.8" fill="rgb(45,45,45)"/>
<circle cx="548.7" cy="259.1" r="0.6" fill="rgb(35,35,35)"/>
<circle cx="246.0" cy="424.3" r="0.5" fill="rgb(35,35,35)"/>
<circle cx="368.4" cy="400.0" r="0.5" fill="rgb(30,30,30)"/>
<circle cx="464.8" cy="247.3" r="0.5" fill="rgb(45,45,45)"/>
<circle cx="266.4" cy="221.8" r="0.6" fill="rgb(40,40,40)"/>
<circle cx="290.5" cy="427.4" r="0.6" fill="rgb(45,45,45)"/>
<circle cx="401.4" cy="524.8" r="0.6" fill="rgb(35,35,35)"/>
<circle cx="310.6" cy="249.9" r="0.6" fill="rgb(50,50,50)"/>
<circle cx="250.1" cy="420.8" r="0.5" fill="rgb(75,75,75)"/>
<circle cx="640.0" cy="267.1" r="0.5" fill="rgb(30,30,30)"/>
<circle cx="356.6" cy="201.3" r="0.8" fill="rgb(40,40,40)"/>
<circle cx="511.0" cy="269.2" r="0.6" fill="rgb(35,35,35)"/>
<circle cx="319.2" cy="217.7" r="0.8" fill="rgb(60,60,60)"/>
<circle cx="255.7" cy="221.6" r="0.8" fill="rgb(35,35,35)"/>
<circle cx="575.8" cy="353.1" r="0.6" fill="rgb(45,45,45)"/>
<circle cx="508.1" cy="355.7" r="0.5" fill="rgb(25,25,25)"/>
<circle cx="573.7" cy="457.7" r="0.5" fill="rgb(45,45,45)"/>
<circle cx="590.0" cy="360.7" r="0.5" fill="rgb(25,25,25)"/>
<circle cx="512.4" cy="82.8" r="0.5" fill="rgb(50,50,50)"/>
<circle cx="550.8" cy="239.3" r="0.6" fill="rgb(30,30,30)"/>
<circle cx="517.9" cy="263.6" r="0.6" fill="rgb(40,40,40)"/>
<circle cx="450.9" cy="241.0" r="0.6" fill="rgb(60,60,60)"/>
<circle cx="612.1" cy="414.7" r="0.8" fill="rgb(75,75,75)"/>
<circle cx="261.7" cy="418.0" r="0.8" fill="rgb(60,60,60)"/>
<circle cx="444.8" cy="534.6" r="0.6" fill="rgb(35,35,35)"/>
<circle cx="544.8" cy="86.2" r="0.5" fill="rgb(45,45,45)"/>
<circle cx="458.6" cy="555.5" r="0.8" fill="rgb(40,40,40)"/>
<circle cx="344.1" cy="552.5" r="0.6" fill="rgb(35,35,35)"/>
<circle cx="378.9" cy="110.9" r="0.5" fill="rgb(45,45,45)"/>
<circle cx="294.6" cy="422.4" r="0.5" fill="rgb(75,75,75)"/>
<circle cx="522.2" cy="67.0" r="0.5" fill="rgb(75,75,75)"/>
<circle cx="614.3" cy="242.2" r="0.5" fill="rgb(45,45,45)"/>
<circle cx="593.9" cy="135.9" r="0.6" fill="rgb(40,40,40)"/>
<circle cx="491.8" cy="123.8" r="0.5" fill="rgb(60,60,60)"/>
<circle cx="510.8" cy="142.5" r="0.6" fill="rgb(75,75,75)"/>
<circle cx="572.5" cy="122.0" r="0.5" fill="rgb(45,45,45)"/>
<circle cx="384.2" cy="168.7" r="0.6" fill="rgb(25,25,25)"/>
<circle cx="361.6" cy="120.1" r="0.6" fill="rgb(45,45,45)"/>
<circle cx="625.2" cy="145.8" r="0.6" fill="rgb(75,75,75)"/>
<circle cx="467.7" cy="210.8" r="0.5" fill="rgb(30,30,30)"/>
<circle cx="244.3" cy="567.0" r="0.5" fill="rgb(75,75,75)"/>
<circle cx="538.9" cy="232.2" r="0.5" fill="rgb(45,45,45)"/>
<circle cx="498.0" cy="549.1" r="0.5" fill="rgb(75,75,75)"/>
<circle cx="553.6" cy="227.2" r="0.5" fill="rgb(50,50,50)"/>
<circle cx="497.8" cy="382.3" r="0.8" fill="rgb(45,45,45)"/>
<circle cx="338.4" cy="134.3" r="0.5" fill="rgb(25,25,25)"/>
<circle cx="549.8" cy="489.7" r="0.6" fill="rgb(45,45,45)"/>
<circle cx="314.3" cy="387.5" r="0.5" fill="rgb(35,35,35)"/>
<circle cx="553.8" cy="485.0" r="0.6" fill="rgb(50,50,50)"/>
<circle cx="313.8" cy="482.4" r="0.5" fill="rgb(50,50,50)"/>
<circle cx="387.4" cy="343.4" r="0.6" fill="rgb(50,50,50)"/>
<circle cx="335.8" cy="84.9" r="0.5" fill="rgb(60,60,60)"/>
<circle cx="618.0" cy="314.7" r="0.8" fill="rgb(75,75,75)"/>
<circle cx="303.0" cy="215.9" r="0.5" fill="rgb(30,30,30)"/>
<circle cx="515.2" cy="147.0" r="0.8" fill="rgb(75,75,75)"/>
<circle cx="627.9" cy="109.5" r="0.6" fill="rgb(25,25,25)"/>
<circle cx="431.8" cy="174.7" r="0.5" fill="rgb(50,50,50)"/>
<circle cx="252.8" cy="373.6" r="0.5" fill="rgb(60,60,60)"/>
<circle cx="353.3" cy="399.4" r="0.6" fill="rgb(60,60,60)"/>
<circle cx="265.1" cy="68.5" r="0.8" fill="rgb(35,35,35)"/>
<circle cx="305.8" cy="213.9" r="0.8" fill="rgb(75,75,75)"/>
<circle cx="510.1" cy="351.7" r="0.5" fill="rgb(75,75,75)"/>
<circle cx="457.1" cy="326.0" r="0.8" fill="rgb(60,60,60)"/>
<circle cx="603.5" cy="502.8" r="0.8" fill="rgb(60,60,60)"/>
<circle cx="487.9" cy="475.3" r="0.8" fill="rgb(25,25,25)"/>
<circle cx="510.6" cy="372.8" r="0.8" fill="rgb(45,45,45)"/>
<circle cx="468.5" cy="547.1" r="0.8" fill="rgb(75,75,75)"/>
<circle cx="498.9" cy="215.8" r="0.8" fill="rgb(50,50,50)"/>
<circle cx="455" cy="220.3" r="56.6" fill="url(#earth)"/>
<g clip-path="url(#ec)" filter="url(#bl)">
<path d="M396 230 C398 205 408 186 425 175 C440 166 462 162 484 168 C486 172 482 174 476 173 C465 172 452 173 440 177 C430 183 422 193 418 206 C415 222 416 238 412 252 C410 260 404 262 400 254 C397 246 396 238 396 230Z" fill="#2e3226"/>
<circle cx="415.7" cy="194.7" r="2.1" fill="#2a2e22"/>
<circle cx="413.6" cy="223.3" r="1.8" fill="#55503c"/>
<circle cx="411.6" cy="188.9" r="1.9" fill="#3e4430"/>
<circle cx="435.7" cy="168.8" r="2.1" fill="#5a5844"/>
<circle cx="407.7" cy="215.7" r="1.2" fill="#343a2c"/>
<circle cx="416.9" cy="186.3" r="2.3" fill="#4a4a36"/>
<circle cx="412.0" cy="219.6" r="2.0" fill="#4a4a36"/>
<circle cx="409.9" cy="215.9" r="1.3" fill="#5a5844"/>
<circle cx="405.2" cy="240.4" r="1.1" fill="#5a5844"/>
<circle cx="424.0" cy="181.2" r="1.7" fill="#3e4430"/>
<circle cx="409.7" cy="250.9" r="1.9" fill="#3e4430"/>
<circle cx="430.4" cy="176.3" r="2.3" fill="#55503c"/>
<circle cx="406.8" cy="199.9" r="2.2" fill="#5a5844"/>
<circle cx="422.7" cy="179.7" r="1.6" fill="#4a4a36"/>
<circle cx="422.1" cy="182.5" r="1.4" fill="#3e4430"/>
<circle cx="414.0" cy="245.4" r="2.3" fill="#4a4a36"/>
<circle cx="405.4" cy="200.2" r="2.4" fill="#55503c"/>
<circle cx="456.5" cy="166.7" r="2.2" fill="#343a2c"/>
<circle cx="429.3" cy="181.9" r="1.8" fill="#2a2e22"/>
<circle cx="422.2" cy="176.6" r="2.1" fill="#343a2c"/>
<circle cx="419.5" cy="192.3" r="1.4" fill="#2a2e22"/>
<circle cx="408.6" cy="208.2" r="2.4" fill="#55503c"/>
<circle cx="411.7" cy="193.2" r="1.5" fill="#2a2e22"/>
<circle cx="439.5" cy="169.6" r="1.5" fill="#2a2e22"/>
<circle cx="413.5" cy="256.9" r="2.2" fill="#3e4430"/>
<circle cx="426.7" cy="185.0" r="1.9" fill="#55503c"/>
<circle cx="481.5" cy="171.6" r="2.4" fill="#5a5844"/>
<circle cx="408.4" cy="213.2" r="1.6" fill="#4a4a36"/>
<circle cx="474.1" cy="175.5" r="1.1" fill="#343a2c"/>
<circle cx="413.5" cy="208.3" r="1.6" fill="#3e4430"/>
<circle cx="417.0" cy="184.7" r="2.4" fill="#55503c"/>
<circle cx="419.8" cy="249.7" r="1.2" fill="#55503c"/>
<circle cx="461.6" cy="168.3" r="1.9" fill="#2a2e22"/>
<circle cx="416.1" cy="185.2" r="1.4" fill="#55503c"/>
<circle cx="479.9" cy="171.0" r="1.9" fill="#3e4430"/>
<circle cx="414.4" cy="225.3" r="2.6" fill="#55503c"/>
<circle cx="477.2" cy="175.9" r="2.4" fill="#55503c"/>
<circle cx="417.0" cy="181.8" r="1.4" fill="#55503c"/>
<circle cx="413.0" cy="214.9" r="2.4" fill="#55503c"/>
<circle cx="416.4" cy="237.2" r="1.1" fill="#5a5844"/>
<circle cx="455.7" cy="170.5" r="1.3" fill="#4a4a36"/>
<circle cx="459.7" cy="172.3" r="1.5" fill="#3e4430"/>
<circle cx="408.6" cy="217.9" r="1.3" fill="#55503c"/>
<circle cx="425.4" cy="178.0" r="2.6" fill="#2a2e22"/>
<circle cx="474.1" cy="168.2" r="1.9" fill="#55503c"/>
<circle cx="410.8" cy="227.9" r="1.3" fill="#55503c"/>
<circle cx="412.0" cy="221.3" r="2.3" fill="#55503c"/>
<circle cx="408.0" cy="225.9" r="2.6" fill="#343a2c"/>
<circle cx="412.2" cy="228.3" r="2.2" fill="#2a2e22"/>
<circle cx="417.7" cy="240.3" r="1.9" fill="#2a2e22"/>
<circle cx="406.5" cy="201.4" r="1.8" fill="#5a5844"/>
<circle cx="442.5" cy="174.0" r="1.6" fill="#3e4430"/>
<circle cx="458.7" cy="165.8" r="1.8" fill="#5a5844"/>
<circle cx="415.5" cy="253.3" r="2.4" fill="#3e4430"/>
<circle cx="468.3" cy="170.5" r="2.2" fill="#55503c"/>
<circle cx="450.9" cy="169.9" r="2.4" fill="#55503c"/>
<circle cx="404.0" cy="241.6" r="2.2" fill="#343a2c"/>
<circle cx="444.9" cy="172.5" r="1.4" fill="#4a4a36"/>
<circle cx="443.3" cy="171.2" r="1.0" fill="#3e4430"/>
<circle cx="435.0" cy="171.2" r="2.2" fill="#55503c"/>
<circle cx="416.6" cy="257.6" r="2.3" fill="#5a5844"/>
<circle cx="467.7" cy="173.8" r="2.3" fill="#3e4430"/>
<circle cx="412.8" cy="217.9" r="1.5" fill="#3e4430"/>
<circle cx="433.1" cy="169.5" r="2.4" fill="#3e4430"/>
<circle cx="409.7" cy="240.4" r="2.4" fill="#2a2e22"/>
<circle cx="416.1" cy="181.9" r="1.2" fill="#4a4a36"/>
<circle cx="412.2" cy="207.4" r="2.1" fill="#2a2e22"/>
<circle cx="419.6" cy="251.6" r="2.6" fill="#55503c"/>
<circle cx="414.0" cy="241.8" r="1.2" fill="#4a4a36"/>
<circle cx="412.1" cy="234.5" r="2.6" fill="#4a4a36"/>
<path d="M416 184 C420 176 428 171 436 168 C434 174 428 180 420 186Z" fill="#7a8088"/>
<path d="M419 177 C422 173 427 171 431 170 C428 174 424 177 421 179Z" fill="#a8acb2"/>
<path d="M437 270 C443 264 456 263 464 267 C466 272 458 277 448 277 C441 276 436 274 437 270Z" fill="#3c382c"/>
</g>
<path d="M239.5 320 C272 287 325 238 405.8 192.6" stroke="#d0d0d0" stroke-width="1.3" fill="none"/>
<path d="M483.7 171 C492 174 499 180 502.5 188.6" stroke="#e0e0e0" stroke-width="1.3" fill="none"/>
<path d="M238 517.5 C330 505 420 460 500 405 C560 365 610 318 640 294.5" stroke="#d0d0d0" stroke-width="1.3" fill="none"/>
<filter id="bl3" x="-80%" y="-80%" width="260%" height="260%"><feGaussianBlur stdDeviation="0.9"/></filter><circle cx="577.4" cy="240.3" r="5.6" fill="none" stroke="#dcd6b0" stroke-width="3" filter="url(#bl3)"/>
<circle cx="577.4" cy="240.3" r="4.3" fill="#642a12" filter="url(#bl2)"/>
<g transform="translate(575 304.5) rotate(46)"><rect x="-25" y="-3.6" width="50" height="7.2" fill="#18242f" stroke="#5a6672" stroke-width="0.8"/><path d="M-12.5 -3.6v7.2M0 -3.6v7.2M12.5 -3.6v7.2" stroke="#5a6672" stroke-width="0.8"/></g>
<g transform="translate(618 360.5) rotate(47)"><rect x="-24" y="-3.6" width="48" height="7.2" fill="#18242f" stroke="#5a6672" stroke-width="0.8"/><path d="M-12 -3.6v7.2M0 -3.6v7.2M12 -3.6v7.2" stroke="#5a6672" stroke-width="0.8"/></g>
<g filter="url(#bl2)">
<ellipse cx="602.5" cy="323" rx="3.8" ry="4.2" fill="#565a48" stroke="#70745e" stroke-width="0.6"/><ellipse cx="608" cy="329.5" rx="3.8" ry="4.4" fill="#565a48" stroke="#70745e" stroke-width="0.6"/>
<ellipse cx="586.5" cy="336" rx="3.8" ry="4" fill="#565a48" stroke="#70745e" stroke-width="0.6"/><ellipse cx="591" cy="342" rx="3.8" ry="4.2" fill="#565a48" stroke="#70745e" stroke-width="0.6"/>
<rect x="590.5" y="326.5" width="10" height="10" fill="#4a4a4a" stroke="#8a8a8a" stroke-width="0.8" transform="rotate(45 595.5 331.5)"/>
<rect x="594" y="332" width="7" height="6" fill="none" stroke="#6a6020" stroke-width="1" transform="rotate(-40 597.5 335)"/>
</g>

<g>
<path d="M285 530 L297.5 519" stroke="#d01010" stroke-width="1.2"/><path d="M299.5 517 l-4.5 1 l2.5 3z" fill="#d01010"/>
<path d="M286 537 L294 546.5" stroke="#e0e0e0" stroke-width="1"/><path d="M295.5 548.5 l-1-4.5 l-3 2.5z" fill="#e0e0e0"/>
<rect x="279" y="528.5" width="6" height="9" fill="#6a6a6a" transform="rotate(-40 282 533)"/>
<path d="M277 527.5 l3-3 l1.5 4z" fill="#e0e0e0"/>
<text x="301.5" y="518" font-family="Liberation Serif" font-size="8" fill="#d01010">X</text>
<text x="296.5" y="549" font-family="Liberation Serif" font-size="8" fill="#e0e0e0">Y</text>
<text x="277" y="525.5" font-family="Liberation Serif" font-size="8" fill="#e0e0e0">Z</text>
</g>
<rect x="243.5" y="548.5" width="18.5" height="18.5" fill="#1e1e1e"/>
<path d="M247 563.5 A7 7 0 1 1 258.5 563.5" stroke="#f0f0f0" stroke-width="2.2" fill="none"/>
<path d="M250.5 560.5 L256 556" stroke="#e01010" stroke-width="1.6"/>
<defs><linearGradient id="bb" x1="0" y1="0" x2="0" y2="1"><stop offset="0" stop-color="#3f9ede"/><stop offset="1" stop-color="#1c6aa6"/></linearGradient></defs><rect x="271.5" y="549.5" width="17.5" height="17.5" fill="url(#bb)" stroke="#6ab4e8" stroke-width="0.8"/>
<g fill="none" stroke="#fff" stroke-width="1.6"><circle cx="277.5" cy="555.5" r="2.3"/><circle cx="283" cy="561" r="2.3"/></g>
<g stroke="#fff" stroke-width="1" stroke-dasharray="1 1"><circle cx="277.5" cy="555.5" r="3.6" fill="none"/><circle cx="283" cy="561" r="3.6" fill="none"/></g>
<rect x="299" y="549.5" width="17" height="17.5" fill="url(#bb)" stroke="#6ab4e8" stroke-width="0.8"/>
<g stroke="#fff" stroke-width="2" fill="#fff">
<path d="M302.5 552.5 l3.5 3.5 M312.5 552.5 l-3.5 3.5 M302.5 563.5 l3.5 -3.5 M312.5 563.5 l-3.5 -3.5" />
</g>
<g fill="#fff"><path d="M301.5 551.5h5l-5 5z M313.5 551.5h-5l5 5z M301.5 564.5h5l-5 -5z M313.5 564.5h-5l5 -5z"/></g>
<rect x="433.5" y="524.5" width="203" height="42" rx="5" fill="#1b1b1b" stroke="#9a9a9a" stroke-width="1"/>
<g fill="#e8e8e8">
<rect x="485" y="530" width="1.5" height="7"/><path d="M487 533.5l4-3.5v7z M490.5 533.5l4-3.5v7z"/>
<path d="M499 533.5l4-3.5v7z M502.5 533.5l4-3.5v7z"/>
<path d="M515.5 528l12 5.8l-12 5.8z"/>
<path d="M550 530v7l4-3.5z M553.5 530v7l4-3.5z"/>
<path d="M562 530v7l4-3.5z M565.5 530v7l4-3.5z"/><rect x="569.5" y="530" width="1.5" height="7"/>
<path d="M577 532.5h4.5l-2.25 2.2z"/>
<path d="M438 558.5h4.5l-2.25 2.2z"/>
<path d="M630 555.5l-2.8 3h5.6z M630 564.5l-2.8 -3h5.6z"/>
</g>
<circle cx="537.5" cy="533.5" r="4.6" fill="#f00000"/>
<rect x="437.5" y="542.5" width="195.5" height="10.5" rx="5.25" fill="#1b1b1b" stroke="#c8c8c8" stroke-width="1"/>
<circle cx="601.3" cy="547.7" r="4.3" fill="#e8e8e8"/>
<text x="455" y="564.2" font-family="Liberation Sans" font-size="10" fill="#d8dce4">01/01/1950 12:42:17.943</text>
<text x="591" y="564.2" font-family="Liberation Sans" font-size="10" fill="#d8dce4">x 1800</text>
</svg>

<!-- timeline -->
<div class="a" style="left:17px;top:326px;width:216px;height:6px;background:#eeeeee"></div>
<div class="a" style="left:109px;top:327px;width:31px;height:3px;background:repeating-linear-gradient(to right,#c4c4c4 0 1px,#ebebeb 1px 2.5px)"></div>
<div class="a" style="left:314px;top:573.5px;width:31px;height:3px;background:repeating-linear-gradient(to right,#c8c8c8 0 1px,#ececec 1px 2.5px)"></div>
<div class="a" style="left:234px;top:309px;width:3px;height:16px;background:repeating-linear-gradient(#c8c8c8 0 1px,#ececec 1px 2.5px)"></div>
<svg class="a" style="left:0;top:0" width="640" height="720" viewBox="0 0 640 720">
<defs><clipPath id="tlc"><rect x="98.5" y="579" width="531.5" height="141"/></clipPath><clipPath id="lc"><rect x="33.5" y="579" width="64" height="141"/></clipPath></defs>
<rect x="33.5" y="579" width="596.5" height="141" fill="#d3d3d3"/>
<path d="M33 578.5H630" stroke="#bdbdbd" stroke-width="1"/>
<path d="M33.5 619.5H630" stroke="#bababa" stroke-width="1.2"/>
<path d="M33.5 632H630" stroke="#bababa" stroke-width="1.2"/>
<path d="M33.5 655.5H630" stroke="#bababa" stroke-width="1.2"/>
<path d="M33.5 678.5H630" stroke="#bababa" stroke-width="1.2"/>
<path d="M33.5 702H630" stroke="#bababa" stroke-width="1.2"/>
<g clip-path="url(#tlc)">
<path d="M98.5 605H630" stroke="#3a3a3a" stroke-width="1.1"/>
<path d="M98.5 603.5V606" stroke="#3a3a3a" stroke-width="1.3"/>
<rect x="106.8" y="605.3" width="1" height="1.2" fill="#555"/>
<rect x="115.7" y="605.3" width="1" height="1.2" fill="#555"/>
<rect x="124.5" y="605.3" width="1" height="1.2" fill="#555"/>
<text x="98.5" y="601.5" text-anchor="middle" font-family="Liberation Sans" font-size="10" fill="#1a1a1a">0h</text>
<path d="M133.8 603.5V606" stroke="#3a3a3a" stroke-width="1.3"/>
<rect x="142.2" y="605.3" width="1" height="1.2" fill="#555"/>
<rect x="151.0" y="605.3" width="1" height="1.2" fill="#555"/>
<rect x="159.8" y="605.3" width="1" height="1.2" fill="#555"/>
<text x="133.8" y="601.5" text-anchor="middle" font-family="Liberation Sans" font-size="10" fill="#1a1a1a">1h</text>
<path d="M169.2 603.5V606" stroke="#3a3a3a" stroke-width="1.3"/>
<rect x="177.5" y="605.3" width="1" height="1.2" fill="#555"/>
<rect x="186.4" y="605.3" width="1" height="1.2" fill="#555"/>
<rect x="195.2" y="605.3" width="1" height="1.2" fill="#555"/>
<text x="169.2" y="601.5" text-anchor="middle" font-family="Liberation Sans" font-size="10" fill="#1a1a1a">2h</text>
<path d="M204.5 603.5V606" stroke="#3a3a3a" stroke-width="1.3"/>
<rect x="212.9" y="605.3" width="1" height="1.2" fill="#555"/>
<rect x="221.7" y="605.3" width="1" height="1.2" fill="#555"/>
<rect x="230.5" y="605.3" width="1" height="1.2" fill="#555"/>
<text x="204.5" y="601.5" text-anchor="middle" font-family="Liberation Sans" font-size="10" fill="#1a1a1a">3h</text>
<path d="M239.9 603.5V606" stroke="#3a3a3a" stroke-width="1.3"/>
<rect x="248.2" y="605.3" width="1" height="1.2" fill="#555"/>
<rect x="257.0" y="605.3" width="1" height="1.2" fill="#555"/>
<rect x="265.9" y="605.3" width="1" height="1.2" fill="#555"/>
<text x="239.9" y="601.5" text-anchor="middle" font-family="Liberation Sans" font-size="10" fill="#1a1a1a">4h</text>
<path d="M275.2 603.5V606" stroke="#3a3a3a" stroke-width="1.3"/>
<rect x="283.5" y="605.3" width="1" height="1.2" fill="#555"/>
<rect x="292.4" y="605.3" width="1" height="1.2" fill="#555"/>
<rect x="301.2" y="605.3" width="1" height="1.2" fill="#555"/>
<text x="275.2" y="601.5" text-anchor="middle" font-family="Liberation Sans" font-size="10" fill="#1a1a1a">5h</text>
<path d="M310.5 603.5V606" stroke="#3a3a3a" stroke-width="1.3"/>
<rect x="318.9" y="605.3" width="1" height="1.2" fill="#555"/>
<rect x="327.7" y="605.3" width="1" height="1.2" fill="#555"/>
<rect x="336.5" y="605.3" width="1" height="1.2" fill="#555"/>
<text x="310.5" y="601.5" text-anchor="middle" font-family="Liberation Sans" font-size="10" fill="#1a1a1a">6h</text>
<path d="M345.9 603.5V606" stroke="#3a3a3a" stroke-width="1.3"/>
<rect x="354.2" y="605.3" width="1" height="1.2" fill="#555"/>
<rect x="363.1" y="605.3" width="1" height="1.2" fill="#555"/>
<rect x="371.9" y="605.3" width="1" height="1.2" fill="#555"/>
<text x="345.9" y="601.5" text-anchor="middle" font-family="Liberation Sans" font-size="10" fill="#1a1a1a">7h</text>
<path d="M381.2 603.5V606" stroke="#3a3a3a" stroke-width="1.3"/>
<rect x="389.6" y="605.3" width="1" height="1.2" fill="#555"/>
<rect x="398.4" y="605.3" width="1" height="1.2" fill="#555"/>
<rect x="407.2" y="605.3" width="1" height="1.2" fill="#555"/>
<text x="381.2" y="601.5" text-anchor="middle" font-family="Liberation Sans" font-size="10" fill="#1a1a1a">8h</text>
<path d="M416.6 603.5V606" stroke="#3a3a3a" stroke-width="1.3"/>
<rect x="424.9" y="605.3" width="1" height="1.2" fill="#555"/>
<rect x="433.7" y="605.3" width="1" height="1.2" fill="#555"/>
<rect x="442.6" y="605.3" width="1" height="1.2" fill="#555"/>
<text x="416.6" y="601.5" text-anchor="middle" font-family="Liberation Sans" font-size="10" fill="#1a1a1a">9h</text>
<path d="M451.9 603.5V606" stroke="#3a3a3a" stroke-width="1.3"/>
<rect x="460.2" y="605.3" width="1" height="1.2" fill="#555"/>
<rect x="469.1" y="605.3" width="1" height="1.2" fill="#555"/>
<rect x="477.9" y="605.3" width="1" height="1.2" fill="#555"/>
<text x="451.9" y="601.5" text-anchor="middle" font-family="Liberation Sans" font-size="10" fill="#1a1a1a">10h</text>
<path d="M487.2 603.5V606" stroke="#3a3a3a" stroke-width="1.3"/>
<rect x="495.6" y="605.3" width="1" height="1.2" fill="#555"/>
<rect x="504.4" y="605.3" width="1" height="1.2" fill="#555"/>
<rect x="513.2" y="605.3" width="1" height="1.2" fill="#555"/>
<text x="487.2" y="601.5" text-anchor="middle" font-family="Liberation Sans" font-size="10" fill="#1a1a1a">11h</text>
<path d="M522.6 603.5V606" stroke="#3a3a3a" stroke-width="1.3"/>
<rect x="530.9" y="605.3" width="1" height="1.2" fill="#555"/>
<rect x="539.8" y="605.3" width="1" height="1.2" fill="#555"/>
<rect x="548.6" y="605.3" width="1" height="1.2" fill="#555"/>
<text x="522.6" y="601.5" text-anchor="middle" font-family="Liberation Sans" font-size="10" fill="#1a1a1a">12h</text>
<path d="M557.9 603.5V606" stroke="#3a3a3a" stroke-width="1.3"/>
<rect x="566.3" y="605.3" width="1" height="1.2" fill="#555"/>
<rect x="575.1" y="605.3" width="1" height="1.2" fill="#555"/>
<rect x="583.9" y="605.3" width="1" height="1.2" fill="#555"/>
<text x="557.9" y="601.5" text-anchor="middle" font-family="Liberation Sans" font-size="10" fill="#1a1a1a">13h</text>
<path d="M593.3 603.5V606" stroke="#3a3a3a" stroke-width="1.3"/>
<rect x="601.6" y="605.3" width="1" height="1.2" fill="#555"/>
<rect x="610.4" y="605.3" width="1" height="1.2" fill="#555"/>
<rect x="619.3" y="605.3" width="1" height="1.2" fill="#555"/>
<text x="593.3" y="601.5" text-anchor="middle" font-family="Liberation Sans" font-size="10" fill="#1a1a1a">14h</text>
<path d="M628.6 603.5V606" stroke="#3a3a3a" stroke-width="1.3"/>
<rect x="636.9" y="605.3" width="1" height="1.2" fill="#555"/>
<rect x="645.8" y="605.3" width="1" height="1.2" fill="#555"/>
<rect x="654.6" y="605.3" width="1" height="1.2" fill="#555"/>
<text x="628.6" y="601.5" text-anchor="middle" font-family="Liberation Sans" font-size="10" fill="#1a1a1a">15h</text>
<text x="389.5" y="591" text-anchor="middle" font-family="Liberation Sans" font-size="10" fill="#1a1a1a">01/01/1950</text>
<path d="M99 580V593" stroke="#333" stroke-width="1.2"/>
<path d="M544.5 622.5h7l-3.5 6z" fill="none" stroke="#222" stroke-width="1"/>
<rect x="98.5" y="640" width="187.5" height="11" fill="#7f7f7f"/>
<rect x="286" y="640" width="337" height="11" fill="#c2c2c2"/>
<text x="192.2" y="649.3" text-anchor="middle" font-family="Liberation Sans" font-size="10" fill="#e4e4e4">Ariane 5 GTO</text>
<text x="454.5" y="649.3" text-anchor="middle" font-family="Liberation Sans" font-size="10" fill="#eeeeee">New Geosynchronous' orbit</text>
<clipPath id="sq0"><rect x="98.5" y="660" width="35.3" height="16"/></clipPath>
<rect x="98.5" y="664" width="35.3" height="10" fill="#c4c4c4"/>
<text x="116.2" y="672.8" text-anchor="middle" font-family="Liberation Sans" font-size="10" fill="#f2f2f2" clip-path="url(#sq0)">Folded - Stone (1)</text>
<clipPath id="sq1"><rect x="133.8" y="660" width="152.2" height="16"/></clipPath>
<rect x="133.8" y="664" width="152.2" height="10" fill="#c4c4c4"/>
<text x="209.9" y="672.8" text-anchor="middle" font-family="Liberation Sans" font-size="10" fill="#f2f2f2" clip-path="url(#sq1)">Folded - Earth pointing (1)</text>
<clipPath id="sq2"><rect x="286.0" y="660" width="95.2" height="16"/></clipPath>
<rect x="286.0" y="664" width="95.2" height="10" fill="#c4c4c4"/>
<text x="333.6" y="672.8" text-anchor="middle" font-family="Liberation Sans" font-size="10" fill="#f2f2f2" clip-path="url(#sq2)">Deployment - Earth pointing (1)</text>
<clipPath id="sq3"><rect x="381.2" y="660" width="241.8" height="16"/></clipPath>
<rect x="381.2" y="664" width="241.8" height="10" fill="#c4c4c4"/>
<text x="502.1" y="672.8" text-anchor="middle" font-family="Liberation Sans" font-size="10" fill="#f2f2f2" clip-path="url(#sq3)">Deployed - Earth pointing - Solar array working (1)</text>
<path d="M99.2 640.5V651.5" stroke="#2a2a2a" stroke-width="1.3"/><circle cx="99.2" cy="638.0" r="2.6" fill="none" stroke="#2a2a2a" stroke-width="1"/>
<path d="M286.0 640.5V651.5" stroke="#2a2a2a" stroke-width="1.3"/><circle cx="286.0" cy="638.0" r="2.6" fill="none" stroke="#2a2a2a" stroke-width="1"/>
<path d="M624.3 640.5V651.5" stroke="#2a2a2a" stroke-width="1.3"/><circle cx="624.3" cy="638.0" r="2.6" fill="none" stroke="#2a2a2a" stroke-width="1"/>
<path d="M99.2 664.0V674.5" stroke="#2a2a2a" stroke-width="1.3"/><circle cx="99.2" cy="661.5" r="2.6" fill="none" stroke="#2a2a2a" stroke-width="1"/>
<path d="M135.2 664.0V674.5" stroke="#2a2a2a" stroke-width="1.3"/><circle cx="135.2" cy="661.5" r="2.6" fill="none" stroke="#2a2a2a" stroke-width="1"/>
<path d="M286.0 664.0V674.5" stroke="#2a2a2a" stroke-width="1.3"/><circle cx="286.0" cy="661.5" r="2.6" fill="none" stroke="#2a2a2a" stroke-width="1"/>
<path d="M381.2 664.0V674.5" stroke="#2a2a2a" stroke-width="1.3"/><circle cx="381.2" cy="661.5" r="2.6" fill="none" stroke="#2a2a2a" stroke-width="1"/>
<path d="M624.3 664.0V674.5" stroke="#2a2a2a" stroke-width="1.3"/><circle cx="624.3" cy="661.5" r="2.6" fill="none" stroke="#2a2a2a" stroke-width="1"/>
<path d="M99.2 687.0V698.5" stroke="#2a2a2a" stroke-width="1.3"/><circle cx="99.2" cy="684.5" r="2.6" fill="none" stroke="#2a2a2a" stroke-width="1"/>
<path d="M133.8 687.0V698.5" stroke="#2a2a2a" stroke-width="1.3"/><circle cx="133.8" cy="684.5" r="2.6" fill="none" stroke="#2a2a2a" stroke-width="1"/>
<path d="M169.2 687.0V698.5" stroke="#2a2a2a" stroke-width="1.3"/><circle cx="169.2" cy="684.5" r="2.6" fill="none" stroke="#2a2a2a" stroke-width="1"/>
<path d="M204.5 687.0V698.5" stroke="#2a2a2a" stroke-width="1.3"/><circle cx="204.5" cy="684.5" r="2.6" fill="none" stroke="#2a2a2a" stroke-width="1"/>
<path d="M239.9 687.0V698.5" stroke="#2a2a2a" stroke-width="1.3"/><circle cx="239.9" cy="684.5" r="2.6" fill="none" stroke="#2a2a2a" stroke-width="1"/>
<path d="M275.2 687.0V698.5" stroke="#2a2a2a" stroke-width="1.3"/><circle cx="275.2" cy="684.5" r="2.6" fill="none" stroke="#2a2a2a" stroke-width="1"/>
<path d="M310.5 687.0V698.5" stroke="#2a2a2a" stroke-width="1.3"/><circle cx="310.5" cy="684.5" r="2.6" fill="none" stroke="#2a2a2a" stroke-width="1"/>
<path d="M345.9 687.0V698.5" stroke="#2a2a2a" stroke-width="1.3"/><circle cx="345.9" cy="684.5" r="2.6" fill="none" stroke="#2a2a2a" stroke-width="1"/>
<path d="M381.2 687.0V698.5" stroke="#2a2a2a" stroke-width="1.3"/><circle cx="381.2" cy="684.5" r="2.6" fill="none" stroke="#2a2a2a" stroke-width="1"/>
<path d="M416.6 687.0V698.5" stroke="#2a2a2a" stroke-width="1.3"/><circle cx="416.6" cy="684.5" r="2.6" fill="none" stroke="#2a2a2a" stroke-width="1"/>
<path d="M451.9 687.0V698.5" stroke="#2a2a2a" stroke-width="1.3"/><circle cx="451.9" cy="684.5" r="2.6" fill="none" stroke="#2a2a2a" stroke-width="1"/>
<path d="M487.2 687.0V698.5" stroke="#2a2a2a" stroke-width="1.3"/><circle cx="487.2" cy="684.5" r="2.6" fill="none" stroke="#2a2a2a" stroke-width="1"/>
<path d="M522.6 687.0V698.5" stroke="#2a2a2a" stroke-width="1.3"/><circle cx="522.6" cy="684.5" r="2.6" fill="none" stroke="#2a2a2a" stroke-width="1"/>
<path d="M557.9 687.0V698.5" stroke="#2a2a2a" stroke-width="1.3"/><circle cx="557.9" cy="684.5" r="2.6" fill="none" stroke="#2a2a2a" stroke-width="1"/>
<path d="M593.3 687.0V698.5" stroke="#2a2a2a" stroke-width="1.3"/><circle cx="593.3" cy="684.5" r="2.6" fill="none" stroke="#2a2a2a" stroke-width="1"/>
<path d="M624.3 687.0V698.5" stroke="#2a2a2a" stroke-width="1.3"/><circle cx="624.3" cy="684.5" r="2.6" fill="none" stroke="#2a2a2a" stroke-width="1"/>
</g>
<rect x="97" y="579" width="1.3" height="141" fill="#fafafa"/>
<text x="35" y="630.3" font-family="Liberation Sans" font-size="10" fill="#111">Views</text>
<text x="35" y="648.2" font-family="Liberation Sans" font-size="10" fill="#111">Arcs</text>
<text x="35" y="671.5" font-family="Liberation Sans" font-size="10" fill="#111">Sequences</text>
<text x="35" y="694.8" font-family="Liberation Sans" font-size="10" fill="#111">Computation</text>
<text x="35" y="718" font-family="Liberation Sans" font-size="10" fill="#111">Custom</text>
<rect x="87.5" y="663.0" width="8" height="8" fill="#d3d3d3" stroke="#a0a0a0" stroke-width="1"/><path d="M88.5 667h6M91.5 664.0v6" stroke="#a0a0a0" stroke-width="1"/>
<rect x="87.5" y="686.5" width="8" height="8" fill="#d3d3d3" stroke="#a0a0a0" stroke-width="1"/><path d="M88.5 690.5h6M91.5 687.5v6" stroke="#a0a0a0" stroke-width="1"/>
<rect x="87.5" y="709.5" width="8" height="8" fill="#d3d3d3" stroke="#a0a0a0" stroke-width="1"/><path d="M88.5 713.5h6M91.5 710.5v6" stroke="#a0a0a0" stroke-width="1"/>
<circle cx="40.5" cy="600" r="4.3" fill="none" stroke="#a8a8a8" stroke-width="1.1"/><path d="M38.0 600h5" stroke="#a8a8a8" stroke-width="1.1"/>
<circle cx="91.5" cy="600" r="4.3" fill="none" stroke="#a8a8a8" stroke-width="1.1"/><path d="M89.0 600h5" stroke="#a8a8a8" stroke-width="1.1"/>
<path d="M91.5 597.5v5" stroke="#a8a8a8" stroke-width="1.1"/>
<rect x="18" y="578" width="15.5" height="142" fill="#e8e8e8"/>
<path d="M17.5 720V577.5H630" stroke="#d4d4d4" stroke-width="1" fill="none"/>
<path d="M33 579V720" stroke="#c4c4c4" stroke-width="1"/>
<rect x="22" y="580.5" width="5.5" height="6" rx="1" fill="#d4d4d4" stroke="#b0b0b0" stroke-width="0.8"/><path d="M23.5 585l3-3" stroke="#f0f0f0" stroke-width="0.8"/>
<text transform="translate(30 728) rotate(-90)" font-family="Liberation Sans" font-size="10" fill="#111">Timeline</text>
<rect x="630" y="581" width="10" height="139" fill="#e6e6e6"/>
<rect x="630.5" y="581.5" width="9.5" height="12.5" fill="#fafafa" stroke="#c8c8c8" stroke-width="1"/>
<path d="M635 585.5l-3 3h6z" fill="#111"/>
<rect x="630.5" y="594" width="9.5" height="99" fill="#f8f8f8" stroke="#c4c4c4" stroke-width="1"/>
<path d="M632.5 640.5h5M632.5 642.5h5M632.5 644.5h5" stroke="#b0b0b0" stroke-width="0.8"/>
<rect x="630.5" y="693" width="9.5" height="27" fill="#dcdcdc"/>
</svg>
</body></html>
